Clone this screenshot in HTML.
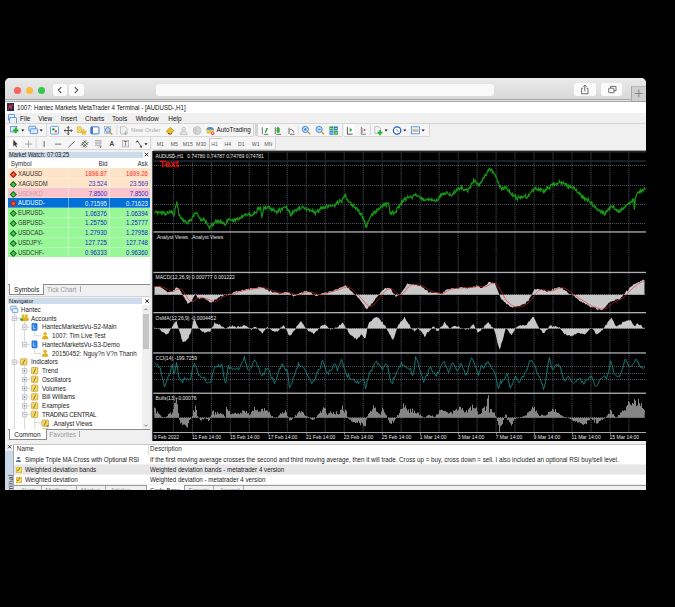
<!DOCTYPE html>
<html><head><meta charset="utf-8"><style>
html,body{margin:0;padding:0;background:#000;width:675px;height:607px;overflow:hidden}
*{box-sizing:content-box}
div{position:absolute}
.t6{position:absolute;font-family:"Liberation Sans",sans-serif;font-size:6.2px;line-height:7px;white-space:nowrap;color:#1a1a1a}
.r{text-align:right}
.pl{position:absolute;top:140.5px;font-family:"Liberation Sans",sans-serif;font-size:5.2px;line-height:6px;white-space:nowrap;color:#5a5a5a}
.ct{position:absolute;font-family:"Liberation Sans",sans-serif;font-size:5px;line-height:6px;white-space:nowrap;color:#e6e6e6}
</style></head><body>
<div id="win" style="left:5px;top:78px;width:641px;height:412px;background:#f0f0f0;border-radius:5px 5px 0 0;overflow:hidden">
</div>
<!-- safari toolbar -->
<div style="left:5px;top:78px;width:641px;height:21.6px;background:linear-gradient(#eaeaea,#d8d8d8);border-radius:5px 5px 0 0"></div>
<div style="left:5px;top:99.4px;width:641px;height:0.9px;background:#a9a9a9"></div>
<div style="left:5px;top:100.2px;width:641px;height:1px;background:#e2e2e2"></div><div style="left:5px;top:101px;width:641px;height:0.8px;background:#a8a8a8"></div>
<div style="left:13.9px;top:86.6px;width:7.4px;height:7.4px;border-radius:50%;background:#fc605b"></div>
<div style="left:26px;top:86.6px;width:7.4px;height:7.4px;border-radius:50%;background:#fdbc40"></div>
<div style="left:37.9px;top:86.6px;width:7.4px;height:7.4px;border-radius:50%;background:#34c84a"></div>
<div style="left:52.6px;top:83.6px;width:14.5px;height:12.9px;border-radius:2.5px;background:#fbfbfb"></div>
<div style="left:68.9px;top:83.6px;width:14.8px;height:12.9px;border-radius:2.5px;background:#fbfbfb"></div>
<svg style="position:absolute;left:0;top:0" width="675" height="607">
<path d="M61.3,87.2 L58.3,90.1 L61.3,93" stroke="#5a5a5a" stroke-width="1.1" fill="none"/>
<path d="M74.8,87.2 L77.8,90.1 L74.8,93" stroke="#5a5a5a" stroke-width="1.1" fill="none"/>
</svg>
<div style="left:156.3px;top:83.9px;width:338px;height:12.6px;border-radius:3px;background:#f9f9f9"></div>
<div style="left:573.8px;top:83px;width:21.8px;height:12.8px;border-radius:2.5px;background:#fbfbfb"></div>
<div style="left:600.8px;top:83px;width:21.5px;height:12.8px;border-radius:2.5px;background:#fbfbfb"></div>
<svg style="position:absolute;left:0;top:0" width="675" height="607">
<path d="M583,88.2 H581.6 V93.8 H588 V88.2 H586.6 M584.8,91.2 V85 M583,86.8 L584.8,85 L586.6,86.8" stroke="#555" stroke-width="0.85" fill="none"/>
<rect x="608.7" y="88.2" width="5.2" height="4.5" stroke="#555" stroke-width="0.85" fill="none" rx="0.5"/>
<path d="M610.6,88.2 V86.4 H616 V90.8 H613.9" stroke="#555" stroke-width="0.85" fill="none"/>
</svg>
<div style="left:631.2px;top:86px;width:14px;height:14.2px;background:#cfcfcf;border-left:0.8px solid #a8a8a8;border-top:0.8px solid #b8b8b8;border-bottom:0.8px solid #a0a0a0"></div>
<svg style="position:absolute;left:0;top:0" width="675" height="607">
<path d="M638.8,89.5 V97.5 M634.8,93.5 H642.8" stroke="#777" stroke-width="0.8"/>
</svg>

<!-- MT4 title row -->
<div style="left:5px;top:101.8px;width:641px;height:11px;background:#ffffff"></div>
<div style="left:6.6px;top:103.2px;width:7.6px;height:7.6px;background:#1d2b52"></div>
<svg style="position:absolute;left:0;top:0" width="675" height="607">
<path d="M8.2,109.5 L9.8,105 L11,108.5 L12.6,104.2" stroke="#d83a2a" stroke-width="1.1" fill="none"/>
</svg>
<div class="t6" style="left:16.9px;top:103.9px;font-size:7px;color:#111;transform:scaleX(0.872);transform-origin:left top">1007: Hantec Markets MetaTrader 4 Terminal - [AUDUSD-,H1]</div>

<!-- menu row -->
<div style="left:5px;top:112.8px;width:641px;height:10.2px;background:#f0f0f0"></div>
<div style="left:7.6px;top:114.4px;width:5.8px;height:4.4px;border:0.8px solid #6b9be0;background:#e8f0fb;border-radius:1px"></div>
<div style="left:9.4px;top:117.2px;width:5.8px;height:4.4px;border:0.8px solid #6b9be0;background:#e8f0fb;border-radius:1px"></div>
<div class="t6" style="left:20px;top:114.6px;font-size:6.5px;color:#111">File</div>
<div class="t6" style="left:38.2px;top:114.6px;font-size:6.5px;color:#111">View</div>
<div class="t6" style="left:60.7px;top:114.6px;font-size:6.5px;color:#111">Insert</div>
<div class="t6" style="left:85px;top:114.6px;font-size:6.5px;color:#111">Charts</div>
<div class="t6" style="left:112px;top:114.6px;font-size:6.5px;color:#111">Tools</div>
<div class="t6" style="left:135.7px;top:114.6px;font-size:6.5px;color:#111">Window</div>
<div class="t6" style="left:168.3px;top:114.6px;font-size:6.5px;color:#111">Help</div>

<!-- toolbars -->
<div style="left:5px;top:123px;width:641px;height:27.6px;background:#f0f0f0"></div>
<div style="left:5px;top:122.6px;width:641px;height:0.7px;background:#d6d6d6"></div>
<!-- toolbar strips -->
<div style="left:7.2px;top:124.1px;width:39.1px;height:11.6px;background:#f5f5f5;border-right:0.8px solid #d8d8d8;border-bottom:0.8px solid #d8d8d8"></div>
<div style="left:48.6px;top:124.1px;width:67.7px;height:11.6px;background:#f5f5f5;border-right:0.8px solid #d8d8d8;border-bottom:0.8px solid #d8d8d8"></div>
<div style="left:116.3px;top:124.1px;width:136.8px;height:11.6px;background:#f5f5f5;border-right:0.8px solid #d8d8d8;border-bottom:0.8px solid #d8d8d8"></div>
<div style="left:255px;top:124.1px;width:2.6px;height:11.6px;background:#d6d6d6"></div>
<div style="left:258px;top:124.1px;width:83.8px;height:11.6px;background:#f5f5f5;border-right:0.8px solid #d8d8d8;border-bottom:0.8px solid #d8d8d8"></div>
<div style="left:343.6px;top:124.1px;width:85px;height:11.6px;background:#f5f5f5;border-right:0.8px solid #d8d8d8;border-bottom:0.8px solid #d8d8d8"></div>
<div style="left:7.7px;top:137.4px;width:142.4px;height:12px;background:#f5f5f5;border-right:0.8px solid #d8d8d8;border-bottom:0.8px solid #d8d8d8"></div>
<div style="left:152.8px;top:137.4px;width:122.5px;height:12px;background:#f5f5f5;border-right:0.8px solid #d8d8d8;border-bottom:0.8px solid #d8d8d8"></div>
<!-- pressed buttons -->
<div style="left:9.4px;top:137.8px;width:11.6px;height:11.2px;background:#fcfcfc"></div>
<div style="left:208.6px;top:137.8px;width:12px;height:11.4px;background:#fcfcfc;border-left:0.7px solid #c8c8c8;border-top:0.7px solid #c8c8c8"></div>
<div style="left:258.9px;top:124.4px;width:11.1px;height:11px;background:#fcfcfc"></div>
<div style="left:343.6px;top:124.4px;width:11.1px;height:11px;background:#fcfcfc"></div>
<svg style="position:absolute;left:0;top:0" width="675" height="607">
<!-- separators -->
<line x1="116.9" y1="125" x2="116.9" y2="135" stroke="#cfcfcf" stroke-width="0.8"/>
<line x1="298.2" y1="125" x2="298.2" y2="135" stroke="#cfcfcf" stroke-width="0.8"/>
<line x1="370.5" y1="125" x2="370.5" y2="135" stroke="#cfcfcf" stroke-width="0.8"/>
<line x1="36.1" y1="138.5" x2="36.1" y2="148.5" stroke="#cfcfcf" stroke-width="0.8"/>
<!-- new chart -->
<rect x="10.4" y="126.4" width="6.4" height="5.6" fill="#dde8f6" stroke="#5a8fd6" stroke-width="0.8"/>
<path d="M15.7,127.6 V133.2 M12.9,130.4 H18.5" stroke="#1cb52a" stroke-width="2"/>
<path d="M21.2,129.4 H24.3 L22.75,131.4 Z" fill="#111"/>
<!-- profiles -->
<rect x="28.8" y="126.2" width="7" height="4.8" fill="#dde8f6" stroke="#4a90e0" stroke-width="0.9" rx="0.8"/>
<rect x="30.3" y="128.8" width="7.4" height="4.8" fill="#dde8f6" stroke="#4a90e0" stroke-width="0.9" rx="0.8"/>
<path d="M39.6,129.4 H42.7 L41.15,131.4 Z" fill="#111"/>
<!-- market watch -->
<rect x="50.5" y="126.4" width="8" height="7.6" fill="#f4f8fd" stroke="#5a9ae0" stroke-width="0.9" rx="1"/>
<circle cx="53.4" cy="129.3" r="1.2" fill="#2aa84a"/>
<circle cx="55.8" cy="131.2" r="1.2" fill="#e85a4a"/>
<!-- data window crosshair -->
<path d="M68.2,126.6 V134.6 M64.2,130.6 H72.2 M66.9,127.9 L68.2,126.6 L69.5,127.9 M66.9,133.3 L68.2,134.6 L69.5,133.3 M65.5,129.3 L64.2,130.6 L65.5,131.9 M70.9,129.3 L72.2,130.6 L70.9,131.9" stroke="#3a3a3a" stroke-width="0.9" fill="none"/>
<!-- navigator -->
<path d="M77.2,126.8 L80.5,126.8 L82,128.2 L82,132.4 L77.2,132.4 Z" fill="#f3d862" stroke="#c8a030" stroke-width="0.5"/>
<path d="M83.8,129.2 L84.7,131.2 L86.6,131.4 L85.2,132.7 L85.6,134.6 L83.8,133.6 L82,134.6 L82.4,132.7 L81,131.4 L82.9,131.2 Z" fill="#f0c828" stroke="#b8901a" stroke-width="0.4"/>
<!-- terminal -->
<rect x="90.8" y="126.9" width="8.2" height="7" fill="#ffffff" stroke="#3a7ad8" stroke-width="1" rx="0.8"/>
<rect x="90.8" y="126.9" width="2.2" height="7" fill="#3a7ad8"/>
<circle cx="92" cy="129.2" r="0.6" fill="#e04040"/>
<!-- strategy tester -->
<rect x="104.4" y="126.6" width="6.4" height="7" fill="#e8eef6" stroke="#a0a8b8" stroke-width="0.6"/>
<circle cx="107.8" cy="130" r="2.4" fill="#c8dcf0" stroke="#4a7ab8" stroke-width="0.8"/>
<path d="M109.5,131.8 L112.4,134.4" stroke="#c8a030" stroke-width="1.3"/>
<!-- new order -->
<path d="M120.5,126.6 H125 L127,128.6 V134 H120.5 Z" fill="#f0f0f0" stroke="#b0b0b0" stroke-width="0.7"/>
<path d="M125.5,131.3 V135 M123.6,133.2 H127.4" stroke="#b0b0b0" stroke-width="1"/>
<!-- gold -->
<path d="M166.3,131.5 L170,127.4 L173.9,130.6 L170.4,134.2 Z" fill="#e8c020" stroke="#a07808" stroke-width="0.6"/>
<path d="M167.8,133 L170.4,134.6 L172.2,133" stroke="#a02020" stroke-width="0.8" fill="none"/>
<!-- people -->
<circle cx="183.6" cy="129.1" r="1.9" fill="#e4e4e4" stroke="#b4b4b4" stroke-width="0.6"/>
<path d="M179.8,134.6 Q180,131.3 183.6,131.3 Q187.2,131.3 187.6,134.6 Z" fill="#e4e4e4" stroke="#b4b4b4" stroke-width="0.6"/>
<!-- globe -->
<circle cx="197" cy="130.6" r="4" fill="#d4d4d4" stroke="#bdbdbd" stroke-width="0.6"/>
<path d="M195,128 Q197,130 195.5,133.5" stroke="#b0b0b0" stroke-width="0.6" fill="none"/>
<!-- autotrading -->
<path d="M206.3,129.6 Q207,126.8 210,126.9 Q213.6,127 214,129.8 L213.6,133.4 L206.8,133.4 Z" fill="#e8c840"/>
<path d="M206.3,129.6 Q207,126.8 210,126.9 Q213.6,127 214,129.8 Z" fill="#3d8fe0"/>
<circle cx="212.6" cy="133.2" r="2" fill="#e02828" stroke="#fff" stroke-width="0.5"/>
<rect x="211.8" y="132.5" width="1.6" height="1.3" fill="#fff"/>
<!-- chart types -->
<path d="M262.3,127.3 V134 M263.6,134.3 H268.2 M265.5,132.6 L266.8,128" stroke="#333" stroke-width="0.7" fill="none"/>
<path d="M265.3,132.3 L267.6,128.2" stroke="#22b030" stroke-width="1.1"/>
<path d="M275.3,127.3 V134 M276.2,134.3 H281" stroke="#333" stroke-width="0.7" fill="none"/>
<rect x="276.9" y="127.6" width="2.5" height="5" rx="0.8" fill="#22c030" stroke="#118820" stroke-width="0.4"/>
<path d="M289,127.8 V134 M290,134.3 H294.6 M289.6,129.9 L291.2,129.3 L293.6,131.2 L293.6,132.4" stroke="#333" stroke-width="0.7" fill="none"/>
<!-- zoom in/out -->
<circle cx="305.3" cy="129.4" r="3.1" fill="#c4dcf4" stroke="#3d84d4" stroke-width="0.9"/>
<path d="M307.5,131.6 L310.2,134.2" stroke="#c8a030" stroke-width="1.4"/>
<path d="M303.8,129.4 H306.8 M305.3,127.9 V130.9" stroke="#2d74c4" stroke-width="0.8"/>
<circle cx="319.1" cy="129.4" r="3.1" fill="#c4dcf4" stroke="#3d84d4" stroke-width="0.9"/>
<path d="M321.3,131.6 L324,134.2" stroke="#c8a030" stroke-width="1.4"/>
<path d="M317.6,129.4 H320.6" stroke="#2d74c4" stroke-width="0.8"/>
<!-- tile -->
<rect x="329.4" y="126.4" width="4" height="4" fill="#2aa840"/>
<rect x="333.8" y="126.4" width="4" height="4" fill="#3a78d0"/>
<rect x="329.4" y="130.8" width="4" height="4" fill="#3a88e0"/>
<rect x="333.8" y="130.8" width="4" height="4" fill="#30b050"/>
<path d="M330,128.6 H332.8 M334.4,128.6 H337.2 M330,133 H332.8 M334.4,133 H337.2" stroke="#fff" stroke-width="0.6"/>
<!-- autoscroll / shift -->
<path d="M347.4,127 V134.2 H352.6" stroke="#333" stroke-width="0.8" fill="none"/>
<path d="M349.7,128 L352.3,130 L349.7,132 Z" fill="#22b030"/>
<path d="M361.3,127 V134.2 H366" stroke="#666" stroke-width="0.8" fill="none"/>
<path d="M362.7,128 V133" stroke="#999" stroke-width="0.8"/>
<circle cx="364.6" cy="130" r="0.9" fill="#e04040"/>
<!-- indicators -->
<path d="M374.8,126.6 H378.8 L380.6,128.4 V133.6 H374.8 Z" fill="#f4f4f4" stroke="#a0a0a0" stroke-width="0.6"/>
<path d="M380,130.2 V135.2 M377.5,132.7 H382.5" stroke="#1cb52a" stroke-width="1.8"/>
<path d="M384.6,129.6 H387.6 L386.1,131.6 Z" fill="#111"/>
<!-- periods clock -->
<circle cx="397.1" cy="130.5" r="3.7" fill="#ffffff" stroke="#1f63c0" stroke-width="1.3"/>
<path d="M396.3,128.8 L397.3,130.6 L398.6,131.4" stroke="#555" stroke-width="0.6" fill="none"/>
<path d="M403.3,129.6 H406.3 L404.8,131.6 Z" fill="#111"/>
<!-- templates -->
<rect x="411.3" y="126.8" width="8.2" height="7" fill="#eaf2fb" stroke="#4a8ad8" stroke-width="0.8"/>
<path d="M412.4,129.4 H418.4 M412.4,131.4 H418.4" stroke="#e08a40" stroke-width="0.5"/>
<path d="M412.4,130.4 H418.4" stroke="#40a040" stroke-width="0.5"/>
<path d="M421.6,129.6 H424.6 L423.1,131.6 Z" fill="#111"/>

<!-- row 2 -->
<path d="M13.3,139.7 L13.3,146.5 L14.9,145 L16.1,147.3 L17,146.9 L15.9,144.6 L17.9,144.4 Z" fill="#3a3a3a"/>
<path d="M28.6,140.6 V147.6 M25.1,144.1 H32.1" stroke="#8a8a8a" stroke-width="0.7"/>
<path d="M44.1,141 V147" stroke="#444" stroke-width="0.8"/>
<path d="M55,144.1 H61.2" stroke="#555" stroke-width="0.8"/>
<path d="M68.4,147.2 L74.7,141.4" stroke="#555" stroke-width="0.8"/>
<path d="M81,145.6 L86.4,140.2 M83,147.4 L88.4,142 M82,141.8 L87,146.8 M81.4,143.6 L85.4,147.6 M83.6,140.6 L87.6,144.6" stroke="#555" stroke-width="0.9"/>
<path d="M95,140.6 H101.6 M95,142.2 H101.6 M95,143.8 H101.6 M95,145.4 H101.6" stroke="#909090" stroke-width="0.7"/>
<path d="M99.3,146.6 H101.7 L100.5,148 Z" fill="#444"/>
<text x="109.6" y="146.4" font-family="Liberation Sans" font-size="6.4" font-weight="bold" fill="#444">A</text>
<rect x="122.3" y="140.3" width="6.4" height="6.6" fill="#f4f4f4" stroke="#999" stroke-width="0.6"/>
<text x="123.5" y="146.2" font-family="Liberation Sans" font-size="6.6" fill="#444">T</text>
<path d="M137.4,141.2 L141,146" stroke="#444" stroke-width="0.8"/>
<path d="M135.6,142.4 L137,140.2 L138.6,141.8 Z" fill="#333"/>
<path d="M139.6,146.8 L142.4,145.6 L141.4,148 Z" fill="#333"/>
<path d="M144.5,143.2 H147.5 L146,145.2 Z" fill="#111"/>
</svg>
<!-- period labels -->
<div class="pl" style="left:156.8px">M1</div>
<div class="pl" style="left:170.8px">M5</div>
<div class="pl" style="left:182.8px">M15</div>
<div class="pl" style="left:196.1px">M30</div>
<div class="pl" style="left:211.2px">H1</div>
<div class="pl" style="left:224.6px">H4</div>
<div class="pl" style="left:238px">D1</div>
<div class="pl" style="left:251.8px">W1</div>
<div class="pl" style="left:264.2px">MN</div>
<div class="t6" style="left:131px;top:126.3px;font-size:6.1px;color:#a8a8a8">New Order</div>
<div class="t6" style="left:216.6px;top:126.3px;font-size:6.3px;color:#111">AutoTrading</div>


<!-- chart -->
<div style="left:150.3px;top:150.6px;width:3px;height:290.7px;background:#e8e8e8"></div>
<div style="left:152.3px;top:150.6px;width:1px;height:290.7px;background:#4a4a4a"></div>
<div style="left:153.3px;top:150.6px;width:492.7px;height:290.7px;background:#000"></div>
<svg style="position:absolute;left:0;top:0" width="675" height="607">
<line x1="173.4" y1="151" x2="173.4" y2="432" stroke="#3d444b" stroke-width="1.1" stroke-dasharray="1.3 0.8"/>
<line x1="192.4" y1="151" x2="192.4" y2="432" stroke="#3d444b" stroke-width="1.1" stroke-dasharray="1.3 0.8"/>
<line x1="211.4" y1="151" x2="211.4" y2="432" stroke="#3d444b" stroke-width="1.1" stroke-dasharray="1.3 0.8"/>
<line x1="230.3" y1="151" x2="230.3" y2="432" stroke="#3d444b" stroke-width="1.1" stroke-dasharray="1.3 0.8"/>
<line x1="249.3" y1="151" x2="249.3" y2="432" stroke="#3d444b" stroke-width="1.1" stroke-dasharray="1.3 0.8"/>
<line x1="268.3" y1="151" x2="268.3" y2="432" stroke="#3d444b" stroke-width="1.1" stroke-dasharray="1.3 0.8"/>
<line x1="287.3" y1="151" x2="287.3" y2="432" stroke="#3d444b" stroke-width="1.1" stroke-dasharray="1.3 0.8"/>
<line x1="306.3" y1="151" x2="306.3" y2="432" stroke="#3d444b" stroke-width="1.1" stroke-dasharray="1.3 0.8"/>
<line x1="325.2" y1="151" x2="325.2" y2="432" stroke="#3d444b" stroke-width="1.1" stroke-dasharray="1.3 0.8"/>
<line x1="344.2" y1="151" x2="344.2" y2="432" stroke="#3d444b" stroke-width="1.1" stroke-dasharray="1.3 0.8"/>
<line x1="363.2" y1="151" x2="363.2" y2="432" stroke="#3d444b" stroke-width="1.1" stroke-dasharray="1.3 0.8"/>
<line x1="382.2" y1="151" x2="382.2" y2="432" stroke="#3d444b" stroke-width="1.1" stroke-dasharray="1.3 0.8"/>
<line x1="401.2" y1="151" x2="401.2" y2="432" stroke="#3d444b" stroke-width="1.1" stroke-dasharray="1.3 0.8"/>
<line x1="420.1" y1="151" x2="420.1" y2="432" stroke="#3d444b" stroke-width="1.1" stroke-dasharray="1.3 0.8"/>
<line x1="439.1" y1="151" x2="439.1" y2="432" stroke="#3d444b" stroke-width="1.1" stroke-dasharray="1.3 0.8"/>
<line x1="458.1" y1="151" x2="458.1" y2="432" stroke="#3d444b" stroke-width="1.1" stroke-dasharray="1.3 0.8"/>
<line x1="477.1" y1="151" x2="477.1" y2="432" stroke="#3d444b" stroke-width="1.1" stroke-dasharray="1.3 0.8"/>
<line x1="496.1" y1="151" x2="496.1" y2="432" stroke="#3d444b" stroke-width="1.1" stroke-dasharray="1.3 0.8"/>
<line x1="515.0" y1="151" x2="515.0" y2="432" stroke="#3d444b" stroke-width="1.1" stroke-dasharray="1.3 0.8"/>
<line x1="534.0" y1="151" x2="534.0" y2="432" stroke="#3d444b" stroke-width="1.1" stroke-dasharray="1.3 0.8"/>
<line x1="553.0" y1="151" x2="553.0" y2="432" stroke="#3d444b" stroke-width="1.1" stroke-dasharray="1.3 0.8"/>
<line x1="572.0" y1="151" x2="572.0" y2="432" stroke="#3d444b" stroke-width="1.1" stroke-dasharray="1.3 0.8"/>
<line x1="591.0" y1="151" x2="591.0" y2="432" stroke="#3d444b" stroke-width="1.1" stroke-dasharray="1.3 0.8"/>
<line x1="609.9" y1="151" x2="609.9" y2="432" stroke="#3d444b" stroke-width="1.1" stroke-dasharray="1.3 0.8"/>
<line x1="628.9" y1="151" x2="628.9" y2="432" stroke="#3d444b" stroke-width="1.1" stroke-dasharray="1.3 0.8"/>
<line x1="154" y1="165.5" x2="646" y2="165.5" stroke="#50585f" stroke-width="1" stroke-dasharray="1 1"/>
<line x1="154" y1="185.5" x2="646" y2="185.5" stroke="#50585f" stroke-width="1" stroke-dasharray="1 1"/>
<line x1="154" y1="204.5" x2="646" y2="204.5" stroke="#50585f" stroke-width="1" stroke-dasharray="1 1"/>
<line x1="154" y1="223.5" x2="646" y2="223.5" stroke="#50585f" stroke-width="1" stroke-dasharray="1 1"/>
<rect x="153.3" y="160.2" width="492.7" height="1.8" fill="#1b252d"/>
<rect x="153.3" y="150.6" width="492.7" height="2" fill="#262626"/>
<line x1="154" y1="294.5" x2="646" y2="294.5" stroke="#50585f" stroke-width="1" stroke-dasharray="1 1"/>
<line x1="154" y1="328.5" x2="646" y2="328.5" stroke="#50585f" stroke-width="1" stroke-dasharray="1 1"/>
<line x1="154" y1="366.5" x2="646" y2="366.5" stroke="#50585f" stroke-width="1" stroke-dasharray="1 1"/>
<line x1="154" y1="373.5" x2="646" y2="373.5" stroke="#50585f" stroke-width="1" stroke-dasharray="1 1"/>
<line x1="154" y1="379.5" x2="646" y2="379.5" stroke="#50585f" stroke-width="1" stroke-dasharray="1 1"/>
<line x1="154" y1="417.5" x2="646" y2="417.5" stroke="#50585f" stroke-width="1" stroke-dasharray="1 1"/>
<path d="M154.3,212.7 L154.8,213.0 L155.3,212.3 L155.8,211.5 L156.3,212.0 L156.8,211.3 L157.3,212.5 L157.8,214.0 L158.3,211.7 L158.8,211.5 L159.3,212.8 L159.8,212.8 L160.3,212.7 L160.8,211.7 L161.3,213.0 L161.8,214.1 L162.3,211.9 L162.8,213.2 L163.3,211.7 L163.8,212.7 L164.3,212.3 L164.8,214.4 L165.3,213.4 L165.8,215.1 L166.3,214.7 L166.8,214.1 L167.3,211.0 L167.8,213.2 L168.3,213.5 L168.8,213.5 L169.3,211.2 L169.8,212.3 L170.3,211.4 L170.8,211.4 L171.3,213.4 L171.8,210.9 L172.3,211.6 L172.8,214.0 L173.3,214.7 L173.8,216.7 L174.3,214.2 L174.8,211.4 L175.3,207.1 L175.8,205.9 L176.3,204.7 L176.8,201.3 L177.3,206.2 L177.8,207.3 L178.3,208.8 L178.8,214.5 L179.3,215.6 L179.8,215.0 L180.3,217.0 L180.8,218.1 L181.3,217.7 L181.8,219.2 L182.3,218.8 L182.8,220.2 L183.3,221.6 L183.8,219.6 L184.3,221.1 L184.8,220.8 L185.3,222.1 L185.8,221.0 L186.3,222.2 L186.8,223.0 L187.3,224.0 L187.8,224.0 L188.3,220.7 L188.8,221.0 L189.3,222.4 L189.8,218.9 L190.3,220.4 L190.8,220.0 L191.3,220.7 L191.8,219.1 L192.3,216.9 L192.8,216.0 L193.3,215.2 L193.8,216.4 L194.3,213.1 L194.8,212.8 L195.3,213.7 L195.8,213.3 L196.3,213.3 L196.8,212.4 L197.3,213.9 L197.8,214.0 L198.3,216.8 L198.8,217.0 L199.3,217.0 L199.8,218.6 L200.3,218.2 L200.8,220.7 L201.3,219.9 L201.8,220.7 L202.3,218.6 L202.8,220.7 L203.3,218.4 L203.8,218.1 L204.3,220.3 L204.8,219.7 L205.3,221.1 L205.8,223.9 L206.3,221.2 L206.8,222.4 L207.3,224.4 L207.8,225.7 L208.3,225.8 L208.8,226.8 L209.3,228.8 L209.8,228.1 L210.3,225.8 L210.8,226.4 L211.3,226.0 L211.8,224.2 L212.3,225.3 L212.8,223.5 L213.3,225.2 L213.8,223.7 L214.3,223.3 L214.8,222.3 L215.3,222.7 L215.8,220.3 L216.3,221.2 L216.8,222.8 L217.3,219.7 L217.8,223.1 L218.3,219.8 L218.8,222.7 L219.3,220.6 L219.8,222.4 L220.3,221.4 L220.8,219.3 L221.3,222.7 L221.8,223.4 L222.3,222.1 L222.8,222.3 L223.3,223.0 L223.8,222.5 L224.3,225.5 L224.8,224.0 L225.3,225.1 L225.8,224.7 L226.3,223.4 L226.8,220.6 L227.3,221.7 L227.8,218.5 L228.3,220.1 L228.8,219.3 L229.3,218.7 L229.8,219.4 L230.3,219.4 L230.8,220.4 L231.3,220.3 L231.8,220.6 L232.3,219.2 L232.8,219.7 L233.3,222.5 L233.8,219.6 L234.3,219.0 L234.8,220.5 L235.3,221.7 L235.8,218.1 L236.3,219.4 L236.8,218.8 L237.3,217.3 L237.8,220.1 L238.3,219.1 L238.8,219.0 L239.3,217.9 L239.8,219.2 L240.3,217.7 L240.8,217.8 L241.3,216.3 L241.8,215.7 L242.3,218.4 L242.8,215.8 L243.3,216.4 L243.8,215.6 L244.3,214.7 L244.8,214.2 L245.3,215.2 L245.8,213.7 L246.3,213.8 L246.8,214.1 L247.3,215.6 L247.8,215.1 L248.3,214.8 L248.8,213.7 L249.3,212.9 L249.8,215.7 L250.3,215.9 L250.8,214.6 L251.3,215.5 L251.8,215.9 L252.3,215.6 L252.8,215.2 L253.3,213.1 L253.8,215.0 L254.3,211.2 L254.8,213.2 L255.3,212.3 L255.8,212.3 L256.3,213.1 L256.8,212.3 L257.3,208.7 L257.8,207.7 L258.3,210.3 L258.8,207.8 L259.3,208.6 L259.8,209.2 L260.3,206.5 L260.8,208.7 L261.3,214.4 L261.8,216.9 L262.3,215.4 L262.8,213.5 L263.3,210.3 L263.8,207.3 L264.3,208.7 L264.8,207.6 L265.3,206.6 L265.8,209.0 L266.3,208.1 L266.8,208.5 L267.3,206.6 L267.8,206.9 L268.3,206.3 L268.8,206.5 L269.3,208.1 L269.8,207.2 L270.3,208.8 L270.8,209.1 L271.3,211.4 L271.8,207.6 L272.3,210.6 L272.8,209.7 L273.3,210.1 L273.8,208.6 L274.3,210.1 L274.8,211.8 L275.3,211.1 L275.8,211.6 L276.3,211.4 L276.8,213.4 L277.3,212.3 L277.8,209.9 L278.3,211.6 L278.8,209.6 L279.3,207.6 L279.8,210.4 L280.3,212.1 L280.8,210.1 L281.3,208.2 L281.8,208.0 L282.3,210.0 L282.8,208.4 L283.3,207.8 L283.8,207.2 L284.3,206.8 L284.8,207.2 L285.3,207.0 L285.8,207.3 L286.3,206.5 L286.8,209.1 L287.3,208.4 L287.8,211.2 L288.3,209.1 L288.8,211.2 L289.3,212.1 L289.8,211.3 L290.3,215.6 L290.8,216.1 L291.3,213.8 L291.8,214.8 L292.3,213.9 L292.8,209.8 L293.3,212.8 L293.8,212.0 L294.3,211.7 L294.8,209.8 L295.3,210.3 L295.8,210.0 L296.3,211.2 L296.8,209.7 L297.3,209.0 L297.8,210.6 L298.3,207.9 L298.8,207.9 L299.3,206.0 L299.8,209.8 L300.3,208.9 L300.8,208.7 L301.3,208.2 L301.8,207.3 L302.3,207.2 L302.8,206.4 L303.3,206.7 L303.8,207.3 L304.3,209.3 L304.8,208.5 L305.3,208.0 L305.8,207.7 L306.3,207.9 L306.8,210.9 L307.3,209.8 L307.8,209.5 L308.3,209.2 L308.8,208.5 L309.3,210.0 L309.8,211.3 L310.3,210.0 L310.8,210.4 L311.3,210.7 L311.8,211.3 L312.3,209.4 L312.8,211.3 L313.3,210.8 L313.8,213.1 L314.3,211.3 L314.8,213.1 L315.3,214.5 L315.8,212.0 L316.3,211.3 L316.8,211.9 L317.3,211.3 L317.8,209.8 L318.3,211.2 L318.8,212.7 L319.3,209.6 L319.8,209.3 L320.3,207.9 L320.8,209.2 L321.3,206.9 L321.8,206.7 L322.3,209.2 L322.8,206.3 L323.3,208.3 L323.8,208.5 L324.3,206.9 L324.8,207.2 L325.3,208.9 L325.8,206.2 L326.3,205.7 L326.8,204.7 L327.3,206.3 L327.8,208.0 L328.3,207.3 L328.8,205.0 L329.3,205.0 L329.8,205.4 L330.3,206.3 L330.8,205.6 L331.3,206.1 L331.8,206.1 L332.3,205.3 L332.8,205.6 L333.3,205.8 L333.8,205.2 L334.3,205.6 L334.8,206.9 L335.3,205.1 L335.8,204.2 L336.3,201.8 L336.8,204.0 L337.3,200.9 L337.8,201.2 L338.3,203.7 L338.8,203.2 L339.3,201.9 L339.8,199.7 L340.3,201.0 L340.8,200.4 L341.3,201.7 L341.8,203.1 L342.3,200.0 L342.8,198.2 L343.3,197.1 L343.8,197.7 L344.3,196.9 L344.8,195.1 L345.3,196.0 L345.8,194.8 L346.3,198.6 L346.8,199.6 L347.3,200.6 L347.8,199.8 L348.3,202.0 L348.8,202.0 L349.3,202.1 L349.8,202.6 L350.3,201.9 L350.8,202.1 L351.3,205.3 L351.8,204.5 L352.3,205.4 L352.8,206.8 L353.3,203.9 L353.8,205.5 L354.3,207.1 L354.8,207.8 L355.3,207.3 L355.8,209.4 L356.3,208.8 L356.8,207.6 L357.3,208.5 L357.8,211.1 L358.3,211.3 L358.8,209.1 L359.3,213.6 L359.8,213.3 L360.3,214.8 L360.8,213.3 L361.3,214.0 L361.8,213.6 L362.3,218.6 L362.8,216.0 L363.3,219.8 L363.8,218.9 L364.3,221.6 L364.8,221.1 L365.3,224.4 L365.8,227.7 L366.3,224.6 L366.8,226.3 L367.3,224.4 L367.8,221.7 L368.3,221.4 L368.8,220.4 L369.3,219.8 L369.8,218.2 L370.3,216.9 L370.8,216.5 L371.3,214.8 L371.8,214.0 L372.3,214.9 L372.8,215.6 L373.3,212.2 L373.8,213.5 L374.3,212.2 L374.8,211.3 L375.3,213.0 L375.8,210.9 L376.3,212.8 L376.8,209.6 L377.3,210.5 L377.8,209.4 L378.3,208.4 L378.8,209.6 L379.3,208.3 L379.8,208.8 L380.3,207.7 L380.8,206.0 L381.3,206.8 L381.8,206.6 L382.3,207.3 L382.8,204.7 L383.3,205.5 L383.8,203.4 L384.3,206.1 L384.8,203.9 L385.3,203.0 L385.8,205.0 L386.3,206.3 L386.8,203.0 L387.3,203.4 L387.8,203.7 L388.3,203.2 L388.8,204.9 L389.3,206.9 L389.8,211.3 L390.3,214.5 L390.8,212.8 L391.3,214.1 L391.8,212.3 L392.3,211.9 L392.8,211.0 L393.3,215.3 L393.8,212.6 L394.3,213.1 L394.8,212.7 L395.3,212.2 L395.8,211.4 L396.3,212.9 L396.8,208.7 L397.3,207.4 L397.8,207.3 L398.3,206.3 L398.8,208.1 L399.3,207.5 L399.8,204.7 L400.3,203.4 L400.8,204.0 L401.3,205.4 L401.8,199.7 L402.3,203.0 L402.8,200.4 L403.3,202.2 L403.8,199.0 L404.3,199.3 L404.8,197.6 L405.3,198.0 L405.8,200.7 L406.3,199.8 L406.8,198.1 L407.3,197.4 L407.8,195.9 L408.3,197.5 L408.8,197.8 L409.3,197.5 L409.8,197.3 L410.3,195.9 L410.8,196.9 L411.3,196.8 L411.8,198.2 L412.3,198.7 L412.8,196.1 L413.3,195.1 L413.8,195.7 L414.3,194.9 L414.8,194.5 L415.3,195.1 L415.8,193.8 L416.3,195.8 L416.8,195.3 L417.3,196.2 L417.8,196.1 L418.3,195.8 L418.8,196.0 L419.3,197.2 L419.8,197.3 L420.3,198.6 L420.8,198.7 L421.3,197.5 L421.8,199.7 L422.3,198.4 L422.8,199.7 L423.3,200.4 L423.8,198.2 L424.3,200.7 L424.8,200.7 L425.3,200.3 L425.8,199.9 L426.3,199.8 L426.8,199.0 L427.3,199.8 L427.8,199.4 L428.3,200.1 L428.8,198.4 L429.3,200.1 L429.8,199.9 L430.3,199.4 L430.8,199.2 L431.3,200.4 L431.8,197.9 L432.3,200.5 L432.8,200.4 L433.3,200.5 L433.8,200.8 L434.3,199.6 L434.8,200.2 L435.3,201.4 L435.8,201.2 L436.3,201.0 L436.8,198.5 L437.3,200.4 L437.8,200.7 L438.3,200.0 L438.8,198.6 L439.3,195.9 L439.8,198.4 L440.3,196.6 L440.8,193.3 L441.3,196.3 L441.8,193.5 L442.3,193.2 L442.8,193.5 L443.3,195.3 L443.8,192.9 L444.3,193.1 L444.8,194.7 L445.3,194.6 L445.8,192.8 L446.3,192.8 L446.8,191.7 L447.3,192.6 L447.8,194.1 L448.3,194.2 L448.8,194.1 L449.3,195.3 L449.8,193.3 L450.3,194.4 L450.8,195.5 L451.3,195.5 L451.8,196.1 L452.3,194.9 L452.8,193.7 L453.3,194.1 L453.8,192.1 L454.3,190.9 L454.8,193.2 L455.3,192.0 L455.8,192.1 L456.3,189.3 L456.8,190.5 L457.3,189.8 L457.8,189.1 L458.3,187.0 L458.8,188.9 L459.3,190.0 L459.8,189.0 L460.3,187.5 L460.8,188.2 L461.3,189.2 L461.8,185.1 L462.3,188.3 L462.8,189.2 L463.3,189.5 L463.8,190.8 L464.3,190.3 L464.8,189.4 L465.3,189.5 L465.8,190.1 L466.3,188.6 L466.8,189.3 L467.3,190.6 L467.8,191.9 L468.3,188.7 L468.8,188.0 L469.3,187.6 L469.8,188.2 L470.3,185.8 L470.8,186.8 L471.3,183.2 L471.8,183.3 L472.3,182.6 L472.8,183.0 L473.3,182.6 L473.8,179.0 L474.3,180.1 L474.8,181.9 L475.3,181.1 L475.8,180.5 L476.3,183.9 L476.8,183.7 L477.3,184.0 L477.8,183.3 L478.3,185.4 L478.8,184.3 L479.3,186.3 L479.8,183.7 L480.3,182.9 L480.8,183.2 L481.3,181.2 L481.8,182.0 L482.3,180.6 L482.8,178.2 L483.3,178.5 L483.8,177.1 L484.3,177.7 L484.8,174.9 L485.3,174.2 L485.8,175.3 L486.3,175.6 L486.8,174.4 L487.3,171.2 L487.8,170.4 L488.3,171.1 L488.8,169.0 L489.3,168.3 L489.8,170.0 L490.3,170.8 L490.8,169.6 L491.3,169.0 L491.8,169.6 L492.3,172.5 L492.8,171.2 L493.3,172.3 L493.8,173.1 L494.3,174.0 L494.8,173.9 L495.3,176.1 L495.8,175.7 L496.3,177.6 L496.8,178.0 L497.3,181.8 L497.8,181.7 L498.3,182.0 L498.8,183.7 L499.3,185.1 L499.8,187.5 L500.3,185.9 L500.8,186.8 L501.3,187.4 L501.8,190.8 L502.3,188.8 L502.8,187.4 L503.3,188.3 L503.8,189.8 L504.3,186.9 L504.8,186.6 L505.3,188.4 L505.8,187.4 L506.3,187.5 L506.8,186.8 L507.3,190.5 L507.8,191.0 L508.3,190.4 L508.8,191.3 L509.3,188.8 L509.8,192.7 L510.3,192.5 L510.8,194.0 L511.3,195.1 L511.8,194.6 L512.3,193.6 L512.8,196.3 L513.3,195.1 L513.8,195.8 L514.3,195.7 L514.8,196.2 L515.3,194.0 L515.8,198.5 L516.3,197.5 L516.8,198.7 L517.3,200.0 L517.8,197.8 L518.3,195.8 L518.8,197.1 L519.3,196.9 L519.8,197.8 L520.3,198.4 L520.8,195.7 L521.3,198.4 L521.8,196.0 L522.3,198.0 L522.8,197.3 L523.3,196.9 L523.8,197.0 L524.3,196.3 L524.8,196.1 L525.3,194.6 L525.8,196.4 L526.3,198.5 L526.8,198.5 L527.3,197.6 L527.8,196.7 L528.3,194.9 L528.8,196.9 L529.3,194.5 L529.8,193.9 L530.3,193.0 L530.8,192.8 L531.3,191.5 L531.8,191.3 L532.3,189.5 L532.8,189.7 L533.3,192.2 L533.8,188.8 L534.3,187.9 L534.8,188.9 L535.3,189.2 L535.8,187.2 L536.3,188.4 L536.8,189.9 L537.3,189.3 L537.8,189.2 L538.3,191.1 L538.8,188.6 L539.3,189.6 L539.8,189.0 L540.3,191.6 L540.8,187.6 L541.3,189.3 L541.8,189.6 L542.3,191.2 L542.8,191.3 L543.3,192.3 L543.8,188.9 L544.3,191.9 L544.8,190.7 L545.3,189.9 L545.8,191.0 L546.3,188.8 L546.8,187.0 L547.3,188.7 L547.8,186.9 L548.3,187.5 L548.8,188.4 L549.3,187.9 L549.8,189.0 L550.3,186.5 L550.8,184.5 L551.3,185.0 L551.8,184.4 L552.3,183.7 L552.8,185.5 L553.3,184.0 L553.8,182.2 L554.3,185.2 L554.8,184.0 L555.3,184.4 L555.8,183.9 L556.3,184.3 L556.8,183.4 L557.3,184.6 L557.8,183.4 L558.3,183.2 L558.8,183.0 L559.3,180.6 L559.8,182.1 L560.3,182.2 L560.8,182.9 L561.3,181.3 L561.8,185.1 L562.3,183.4 L562.8,182.0 L563.3,181.6 L563.8,183.6 L564.3,184.0 L564.8,183.4 L565.3,184.6 L565.8,183.9 L566.3,185.6 L566.8,184.2 L567.3,185.3 L567.8,186.9 L568.3,189.1 L568.8,185.1 L569.3,186.0 L569.8,185.9 L570.3,188.1 L570.8,186.1 L571.3,187.2 L571.8,188.0 L572.3,187.2 L572.8,187.5 L573.3,188.4 L573.8,186.7 L574.3,187.8 L574.8,189.4 L575.3,190.5 L575.8,190.5 L576.3,189.1 L576.8,191.0 L577.3,193.0 L577.8,193.1 L578.3,192.7 L578.8,192.2 L579.3,194.4 L579.8,193.4 L580.3,193.1 L580.8,194.0 L581.3,197.1 L581.8,196.0 L582.3,197.6 L582.8,196.0 L583.3,198.1 L583.8,196.6 L584.3,197.5 L584.8,201.0 L585.3,199.3 L585.8,198.1 L586.3,198.9 L586.8,199.8 L587.3,201.1 L587.8,199.4 L588.3,198.3 L588.8,200.4 L589.3,201.1 L589.8,201.5 L590.3,203.3 L590.8,202.4 L591.3,203.4 L591.8,201.4 L592.3,204.2 L592.8,206.3 L593.3,205.3 L593.8,205.3 L594.3,205.8 L594.8,208.4 L595.3,205.8 L595.8,207.4 L596.3,208.7 L596.8,209.7 L597.3,208.9 L597.8,210.4 L598.3,210.2 L598.8,210.9 L599.3,210.8 L599.8,209.9 L600.3,211.4 L600.8,212.8 L601.3,210.8 L601.8,211.9 L602.3,213.2 L602.8,211.4 L603.3,213.1 L603.8,211.9 L604.3,214.5 L604.8,215.4 L605.3,214.5 L605.8,211.3 L606.3,212.0 L606.8,210.7 L607.3,210.2 L607.8,211.5 L608.3,207.5 L608.8,209.9 L609.3,208.0 L609.8,209.3 L610.3,207.3 L610.8,205.8 L611.3,206.4 L611.8,207.0 L612.3,206.6 L612.8,207.5 L613.3,206.7 L613.8,205.2 L614.3,209.3 L614.8,209.4 L615.3,209.2 L615.8,209.5 L616.3,211.0 L616.8,209.6 L617.3,209.8 L617.8,210.8 L618.3,212.8 L618.8,210.2 L619.3,213.0 L619.8,210.4 L620.3,209.4 L620.8,211.8 L621.3,209.8 L621.8,207.9 L622.3,208.6 L622.8,209.7 L623.3,209.6 L623.8,207.3 L624.3,207.8 L624.8,207.8 L625.3,205.7 L625.8,206.5 L626.3,205.6 L626.8,204.6 L627.3,204.2 L627.8,204.5 L628.3,203.9 L628.8,202.7 L629.3,202.4 L629.8,203.7 L630.3,202.2 L630.8,202.5 L631.3,202.3 L631.8,201.1 L632.3,202.6 L632.8,198.4 L633.3,199.9 L633.8,199.6 L634.3,209.6 L634.8,206.4 L635.3,198.9 L635.8,197.0 L636.3,195.9 L636.8,193.5 L637.3,193.3 L637.8,192.1 L638.3,192.6 L638.8,192.7 L639.3,191.6 L639.8,192.8 L640.3,188.7 L640.8,192.0 L641.3,189.8 L641.8,192.0 L642.3,190.4 L642.8,189.5 L643.3,190.8 L643.8,189.1 L644.3,188.9 L644.8,188.0 L645.3,189.7" stroke="#189818" stroke-width="1.15" fill="none"/>
<path d="M154.5,294.8 L154.5,286.6 L155.5,286.9 L156.5,286.3 L157.5,286.9 L158.5,286.4 L159.5,286.4 L160.5,287.0 L161.5,288.0 L162.5,288.2 L163.5,289.0 L164.5,289.8 L165.5,290.6 L166.5,291.0 L167.5,292.6 L168.5,291.9 L169.5,292.1 L170.5,291.4 L171.5,291.7 L172.5,291.6 L173.5,290.1 L174.5,289.9 L175.5,287.8 L176.5,287.3 L177.5,287.9 L178.5,288.2 L179.5,289.3 L180.5,291.0 L181.5,292.8 L182.5,294.8 L183.5,296.6 L184.5,297.7 L185.5,300.1 L186.5,300.8 L187.5,303.7 L188.5,303.2 L189.5,302.6 L190.5,302.1 L191.5,301.7 L192.5,299.2 L193.5,297.2 L194.5,295.7 L195.5,294.0 L196.5,295.6 L197.5,297.9 L198.5,297.8 L199.5,299.2 L200.5,298.0 L201.5,298.5 L202.5,298.0 L203.5,297.9 L204.5,298.2 L205.5,299.5 L206.5,299.6 L207.5,300.4 L208.5,300.7 L209.5,302.2 L210.5,302.6 L211.5,302.5 L212.5,301.5 L213.5,301.7 L214.5,299.5 L215.5,299.6 L216.5,299.6 L217.5,298.4 L218.5,297.6 L219.5,297.2 L220.5,296.1 L221.5,296.2 L222.5,296.6 L223.5,295.6 L224.5,294.4 L225.5,294.4 L226.5,294.4 L227.5,294.9 L228.5,293.9 L229.5,293.8 L230.5,294.3 L231.5,294.0 L232.5,293.0 L233.5,292.3 L234.5,291.8 L235.5,291.8 L236.5,290.7 L237.5,291.7 L238.5,290.7 L239.5,290.9 L240.5,291.1 L241.5,290.6 L242.5,289.5 L243.5,290.2 L244.5,290.2 L245.5,289.2 L246.5,289.0 L247.5,289.3 L248.5,288.5 L249.5,289.7 L250.5,287.9 L251.5,288.3 L252.5,288.5 L253.5,288.3 L254.5,288.3 L255.5,288.2 L256.5,287.8 L257.5,288.2 L258.5,286.6 L259.5,287.3 L260.5,286.8 L261.5,287.4 L262.5,287.9 L263.5,287.8 L264.5,288.3 L265.5,289.4 L266.5,289.6 L267.5,289.5 L268.5,291.2 L269.5,291.6 L270.5,290.2 L271.5,291.4 L272.5,292.7 L273.5,292.2 L274.5,292.3 L275.5,292.4 L276.5,292.6 L277.5,293.0 L278.5,293.1 L279.5,293.9 L280.5,293.6 L281.5,293.5 L282.5,292.8 L283.5,292.9 L284.5,292.1 L285.5,292.0 L286.5,292.2 L287.5,291.7 L288.5,292.6 L289.5,293.3 L290.5,294.0 L291.5,294.7 L292.5,295.4 L293.5,296.7 L294.5,295.5 L295.5,296.1 L296.5,295.0 L297.5,294.1 L298.5,293.8 L299.5,293.2 L300.5,293.1 L301.5,292.3 L302.5,293.0 L303.5,291.9 L304.5,291.1 L305.5,291.6 L306.5,290.9 L307.5,291.6 L308.5,291.9 L309.5,292.2 L310.5,291.9 L311.5,292.7 L312.5,294.5 L313.5,294.4 L314.5,294.9 L315.5,295.7 L316.5,296.3 L317.5,295.8 L318.5,295.0 L319.5,294.7 L320.5,294.5 L321.5,293.6 L322.5,293.1 L323.5,293.3 L324.5,292.5 L325.5,292.6 L326.5,292.4 L327.5,293.2 L328.5,291.5 L329.5,291.6 L330.5,291.3 L331.5,291.3 L332.5,291.3 L333.5,290.4 L334.5,290.0 L335.5,289.3 L336.5,289.2 L337.5,289.4 L338.5,288.7 L339.5,287.8 L340.5,287.6 L341.5,287.3 L342.5,287.1 L343.5,286.2 L344.5,285.9 L345.5,285.0 L346.5,286.2 L347.5,288.4 L348.5,287.6 L349.5,289.4 L350.5,290.6 L351.5,291.3 L352.5,292.1 L353.5,293.4 L354.5,294.4 L355.5,295.3 L356.5,295.5 L357.5,297.3 L358.5,297.9 L359.5,299.1 L360.5,300.4 L361.5,302.0 L362.5,303.5 L363.5,304.3 L364.5,306.3 L365.5,307.9 L366.5,309.2 L367.5,308.8 L368.5,307.1 L369.5,306.1 L370.5,305.6 L371.5,303.6 L372.5,303.3 L373.5,301.8 L374.5,300.4 L375.5,298.4 L376.5,297.4 L377.5,296.4 L378.5,295.4 L379.5,294.1 L380.5,292.7 L381.5,291.6 L382.5,290.3 L383.5,289.9 L384.5,288.6 L385.5,288.0 L386.5,288.6 L387.5,288.1 L388.5,287.7 L389.5,288.2 L390.5,288.2 L391.5,289.7 L392.5,292.3 L393.5,293.4 L394.5,294.1 L395.5,296.5 L396.5,296.7 L397.5,295.6 L398.5,295.2 L399.5,294.9 L400.5,293.7 L401.5,292.4 L402.5,291.1 L403.5,289.6 L404.5,288.2 L405.5,286.7 L406.5,284.9 L407.5,283.3 L408.5,284.0 L409.5,284.3 L410.5,284.1 L411.5,284.8 L412.5,284.3 L413.5,284.2 L414.5,285.3 L415.5,285.1 L416.5,285.0 L417.5,285.4 L418.5,285.7 L419.5,286.0 L420.5,285.3 L421.5,286.7 L422.5,287.4 L423.5,287.8 L424.5,288.9 L425.5,290.1 L426.5,290.1 L427.5,290.6 L428.5,292.8 L429.5,292.4 L430.5,292.1 L431.5,292.8 L432.5,292.9 L433.5,292.4 L434.5,293.1 L435.5,292.5 L436.5,292.4 L437.5,293.1 L438.5,293.6 L439.5,293.3 L440.5,293.9 L441.5,293.5 L442.5,294.0 L443.5,291.6 L444.5,291.7 L445.5,290.3 L446.5,289.5 L447.5,289.2 L448.5,289.2 L449.5,289.3 L450.5,288.7 L451.5,288.2 L452.5,288.2 L453.5,288.5 L454.5,288.5 L455.5,288.8 L456.5,288.2 L457.5,288.4 L458.5,288.5 L459.5,287.8 L460.5,287.0 L461.5,287.1 L462.5,287.0 L463.5,288.3 L464.5,287.2 L465.5,288.2 L466.5,287.9 L467.5,288.4 L468.5,288.1 L469.5,287.6 L470.5,287.5 L471.5,287.5 L472.5,287.3 L473.5,286.6 L474.5,286.5 L475.5,287.0 L476.5,285.2 L477.5,285.7 L478.5,285.8 L479.5,286.9 L480.5,287.9 L481.5,288.1 L482.5,287.7 L483.5,286.0 L484.5,286.5 L485.5,285.0 L486.5,284.9 L487.5,284.0 L488.5,282.0 L489.5,282.1 L490.5,281.9 L491.5,282.9 L492.5,282.8 L493.5,283.3 L494.5,283.1 L495.5,284.8 L496.5,287.5 L497.5,289.7 L498.5,292.5 L499.5,294.9 L500.5,297.4 L501.5,299.4 L502.5,299.7 L503.5,301.1 L504.5,302.0 L505.5,302.5 L506.5,304.5 L507.5,304.0 L508.5,305.0 L509.5,305.9 L510.5,306.7 L511.5,307.1 L512.5,307.7 L513.5,307.1 L514.5,306.7 L515.5,307.1 L516.5,306.6 L517.5,306.2 L518.5,306.0 L519.5,306.2 L520.5,305.4 L521.5,305.0 L522.5,304.2 L523.5,304.3 L524.5,303.8 L525.5,303.8 L526.5,301.6 L527.5,301.3 L528.5,301.0 L529.5,298.6 L530.5,296.7 L531.5,295.8 L532.5,293.1 L533.5,290.9 L534.5,289.0 L535.5,289.6 L536.5,289.5 L537.5,288.8 L538.5,289.0 L539.5,289.6 L540.5,289.7 L541.5,289.3 L542.5,290.2 L543.5,290.6 L544.5,290.0 L545.5,291.0 L546.5,291.7 L547.5,291.7 L548.5,290.6 L549.5,290.9 L550.5,290.9 L551.5,290.8 L552.5,288.6 L553.5,290.3 L554.5,288.1 L555.5,288.6 L556.5,288.2 L557.5,287.6 L558.5,287.2 L559.5,287.0 L560.5,288.2 L561.5,287.9 L562.5,287.5 L563.5,290.3 L564.5,289.8 L565.5,291.1 L566.5,290.7 L567.5,292.5 L568.5,293.4 L569.5,294.2 L570.5,294.3 L571.5,294.5 L572.5,295.6 L573.5,295.3 L574.5,296.2 L575.5,297.7 L576.5,297.9 L577.5,298.9 L578.5,299.6 L579.5,301.2 L580.5,301.5 L581.5,301.5 L582.5,302.7 L583.5,302.4 L584.5,303.3 L585.5,304.5 L586.5,304.1 L587.5,305.2 L588.5,305.3 L589.5,306.5 L590.5,307.5 L591.5,306.7 L592.5,307.4 L593.5,307.2 L594.5,307.4 L595.5,307.7 L596.5,309.2 L597.5,309.9 L598.5,309.4 L599.5,309.1 L600.5,310.1 L601.5,309.9 L602.5,310.1 L603.5,308.8 L604.5,307.8 L605.5,307.0 L606.5,305.4 L607.5,304.5 L608.5,302.9 L609.5,302.5 L610.5,301.5 L611.5,301.7 L612.5,301.0 L613.5,301.1 L614.5,300.8 L615.5,299.6 L616.5,299.5 L617.5,299.1 L618.5,299.5 L619.5,299.5 L620.5,298.5 L621.5,296.9 L622.5,296.6 L623.5,294.1 L624.5,294.4 L625.5,292.3 L626.5,290.2 L627.5,291.6 L628.5,290.0 L629.5,287.7 L630.5,287.1 L631.5,286.2 L632.5,285.7 L633.5,284.3 L634.5,284.0 L635.5,283.8 L636.5,283.0 L637.5,282.8 L638.5,281.7 L639.5,282.4 L640.5,280.8 L641.5,280.9 L642.5,279.7 L643.5,279.7 L644.5,280.6 L644.5,294.8 Z" fill="#c8c8c8"/>
<path d="M154.5,286.4 L155.5,286.4 L156.5,286.4 L157.5,286.4 L158.5,286.4 L159.5,286.4 L160.5,286.6 L161.5,286.8 L162.5,287.1 L163.5,287.5 L164.5,287.9 L165.5,288.5 L166.5,289.1 L167.5,289.7 L168.5,290.3 L169.5,290.8 L170.5,291.1 L171.5,291.4 L172.5,291.5 L173.5,291.3 L174.5,290.9 L175.5,290.2 L176.5,289.7 L177.5,289.4 L178.5,289.1 L179.5,289.0 L180.5,289.2 L181.5,289.7 L182.5,290.5 L183.5,291.7 L184.5,293.2 L185.5,294.8 L186.5,296.5 L187.5,298.1 L188.5,299.4 L189.5,300.5 L190.5,301.2 L191.5,301.6 L192.5,301.5 L193.5,301.1 L194.5,300.3 L195.5,299.5 L196.5,298.8 L197.5,298.3 L198.5,297.9 L199.5,297.6 L200.5,297.4 L201.5,297.4 L202.5,297.6 L203.5,297.9 L204.5,298.2 L205.5,298.5 L206.5,298.7 L207.5,299.0 L208.5,299.3 L209.5,299.8 L210.5,300.2 L211.5,300.7 L212.5,301.0 L213.5,301.2 L214.5,301.2 L215.5,301.1 L216.5,300.8 L217.5,300.3 L218.5,299.7 L219.5,299.2 L220.5,298.6 L221.5,297.9 L222.5,297.4 L223.5,296.8 L224.5,296.3 L225.5,295.9 L226.5,295.5 L227.5,295.2 L228.5,294.9 L229.5,294.6 L230.5,294.4 L231.5,294.2 L232.5,294.0 L233.5,293.7 L234.5,293.4 L235.5,293.1 L236.5,292.8 L237.5,292.5 L238.5,292.1 L239.5,291.7 L240.5,291.4 L241.5,291.1 L242.5,290.8 L243.5,290.5 L244.5,290.3 L245.5,290.1 L246.5,289.9 L247.5,289.7 L248.5,289.6 L249.5,289.5 L250.5,289.3 L251.5,289.2 L252.5,289.0 L253.5,288.9 L254.5,288.7 L255.5,288.6 L256.5,288.4 L257.5,288.2 L258.5,288.1 L259.5,287.9 L260.5,287.7 L261.5,287.7 L262.5,287.7 L263.5,287.7 L264.5,287.9 L265.5,288.0 L266.5,288.3 L267.5,288.6 L268.5,289.0 L269.5,289.4 L270.5,289.8 L271.5,290.1 L272.5,290.5 L273.5,290.9 L274.5,291.2 L275.5,291.5 L276.5,291.9 L277.5,292.2 L278.5,292.5 L279.5,292.7 L280.5,293.0 L281.5,293.1 L282.5,293.2 L283.5,293.2 L284.5,293.1 L285.5,293.0 L286.5,292.8 L287.5,292.7 L288.5,292.6 L289.5,292.6 L290.5,292.8 L291.5,293.1 L292.5,293.5 L293.5,293.9 L294.5,294.3 L295.5,294.7 L296.5,294.9 L297.5,295.0 L298.5,295.0 L299.5,294.8 L300.5,294.5 L301.5,294.0 L302.5,293.6 L303.5,293.3 L304.5,292.9 L305.5,292.6 L306.5,292.4 L307.5,292.1 L308.5,292.0 L309.5,292.0 L310.5,292.1 L311.5,292.2 L312.5,292.5 L313.5,292.8 L314.5,293.2 L315.5,293.6 L316.5,294.0 L317.5,294.3 L318.5,294.6 L319.5,294.7 L320.5,294.7 L321.5,294.6 L322.5,294.4 L323.5,294.2 L324.5,293.9 L325.5,293.6 L326.5,293.3 L327.5,293.0 L328.5,292.7 L329.5,292.4 L330.5,292.1 L331.5,291.9 L332.5,291.6 L333.5,291.4 L334.5,291.1 L335.5,290.8 L336.5,290.5 L337.5,290.2 L338.5,289.9 L339.5,289.5 L340.5,289.1 L341.5,288.7 L342.5,288.2 L343.5,287.8 L344.5,287.4 L345.5,287.1 L346.5,287.0 L347.5,287.0 L348.5,287.2 L349.5,287.6 L350.5,288.1 L351.5,288.8 L352.5,289.6 L353.5,290.5 L354.5,291.5 L355.5,292.5 L356.5,293.4 L357.5,294.4 L358.5,295.4 L359.5,296.4 L360.5,297.4 L361.5,298.5 L362.5,299.6 L363.5,300.8 L364.5,302.0 L365.5,303.3 L366.5,304.4 L367.5,305.2 L368.5,305.9 L369.5,306.3 L370.5,306.4 L371.5,306.2 L372.5,305.8 L373.5,305.1 L374.5,304.0 L375.5,302.8 L376.5,301.6 L377.5,300.4 L378.5,299.1 L379.5,297.9 L380.5,296.6 L381.5,295.3 L382.5,294.1 L383.5,292.9 L384.5,291.8 L385.5,290.9 L386.5,290.1 L387.5,289.5 L388.5,289.0 L389.5,288.7 L390.5,288.7 L391.5,288.9 L392.5,289.4 L393.5,290.2 L394.5,291.1 L395.5,292.0 L396.5,292.9 L397.5,293.6 L398.5,294.3 L399.5,294.7 L400.5,294.7 L401.5,294.4 L402.5,293.8 L403.5,292.8 L404.5,291.7 L405.5,290.5 L406.5,289.2 L407.5,288.0 L408.5,286.9 L409.5,286.1 L410.5,285.4 L411.5,284.9 L412.5,284.5 L413.5,284.4 L414.5,284.4 L415.5,284.5 L416.5,284.6 L417.5,284.7 L418.5,284.9 L419.5,285.1 L420.5,285.4 L421.5,285.7 L422.5,286.1 L423.5,286.6 L424.5,287.1 L425.5,287.7 L426.5,288.3 L427.5,289.0 L428.5,289.7 L429.5,290.3 L430.5,290.9 L431.5,291.4 L432.5,291.8 L433.5,292.2 L434.5,292.4 L435.5,292.6 L436.5,292.7 L437.5,292.8 L438.5,292.9 L439.5,293.0 L440.5,293.1 L441.5,293.1 L442.5,293.0 L443.5,292.9 L444.5,292.6 L445.5,292.2 L446.5,291.7 L447.5,291.2 L448.5,290.6 L449.5,290.1 L450.5,289.6 L451.5,289.2 L452.5,288.9 L453.5,288.7 L454.5,288.5 L455.5,288.4 L456.5,288.3 L457.5,288.2 L458.5,288.1 L459.5,288.0 L460.5,287.9 L461.5,287.9 L462.5,287.8 L463.5,287.7 L464.5,287.7 L465.5,287.7 L466.5,287.6 L467.5,287.6 L468.5,287.6 L469.5,287.6 L470.5,287.6 L471.5,287.5 L472.5,287.5 L473.5,287.3 L474.5,287.2 L475.5,287.0 L476.5,286.8 L477.5,286.6 L478.5,286.5 L479.5,286.5 L480.5,286.6 L481.5,286.7 L482.5,286.7 L483.5,286.7 L484.5,286.6 L485.5,286.5 L486.5,286.3 L487.5,285.8 L488.5,285.3 L489.5,284.6 L490.5,284.0 L491.5,283.6 L492.5,283.2 L493.5,283.1 L494.5,283.0 L495.5,283.3 L496.5,284.1 L497.5,285.2 L498.5,286.7 L499.5,288.4 L500.5,290.1 L501.5,291.9 L502.5,293.8 L503.5,295.7 L504.5,297.5 L505.5,299.1 L506.5,300.4 L507.5,301.5 L508.5,302.5 L509.5,303.4 L510.5,304.2 L511.5,305.0 L512.5,305.6 L513.5,306.1 L514.5,306.5 L515.5,306.7 L516.5,306.9 L517.5,307.0 L518.5,307.0 L519.5,306.9 L520.5,306.7 L521.5,306.4 L522.5,306.1 L523.5,305.7 L524.5,305.2 L525.5,304.7 L526.5,304.2 L527.5,303.5 L528.5,302.7 L529.5,301.7 L530.5,300.6 L531.5,299.4 L532.5,298.1 L533.5,296.6 L534.5,295.2 L535.5,293.8 L536.5,292.6 L537.5,291.5 L538.5,290.7 L539.5,290.1 L540.5,289.7 L541.5,289.5 L542.5,289.6 L543.5,289.7 L544.5,289.9 L545.5,290.2 L546.5,290.5 L547.5,290.7 L548.5,290.9 L549.5,291.0 L550.5,291.0 L551.5,290.9 L552.5,290.7 L553.5,290.5 L554.5,290.1 L555.5,289.6 L556.5,289.1 L557.5,288.7 L558.5,288.3 L559.5,288.1 L560.5,287.9 L561.5,287.9 L562.5,287.9 L563.5,288.1 L564.5,288.4 L565.5,288.8 L566.5,289.3 L567.5,289.9 L568.5,290.5 L569.5,291.2 L570.5,291.9 L571.5,292.6 L572.5,293.4 L573.5,294.2 L574.5,294.9 L575.5,295.6 L576.5,296.3 L577.5,297.0 L578.5,297.7 L579.5,298.3 L580.5,299.0 L581.5,299.6 L582.5,300.3 L583.5,300.9 L584.5,301.5 L585.5,302.2 L586.5,302.8 L587.5,303.4 L588.5,304.0 L589.5,304.6 L590.5,305.1 L591.5,305.7 L592.5,306.1 L593.5,306.6 L594.5,306.9 L595.5,307.3 L596.5,307.6 L597.5,307.9 L598.5,308.2 L599.5,308.5 L600.5,308.8 L601.5,309.1 L602.5,309.2 L603.5,309.1 L604.5,308.9 L605.5,308.5 L606.5,308.0 L607.5,307.4 L608.5,306.6 L609.5,305.7 L610.5,304.9 L611.5,304.1 L612.5,303.3 L613.5,302.6 L614.5,302.0 L615.5,301.5 L616.5,301.0 L617.5,300.6 L618.5,300.3 L619.5,299.9 L620.5,299.4 L621.5,298.8 L622.5,298.2 L623.5,297.4 L624.5,296.6 L625.5,295.7 L626.5,294.8 L627.5,293.7 L628.5,292.6 L629.5,291.5 L630.5,290.4 L631.5,289.4 L632.5,288.4 L633.5,287.5 L634.5,286.6 L635.5,285.8 L636.5,285.0 L637.5,284.3 L638.5,283.7 L639.5,283.1 L640.5,282.5 L641.5,282.1 L642.5,281.6 L643.5,281.2 L644.5,280.9" stroke="#e02a2a" stroke-width="0.7" fill="none"/>
<path d="M154.5,328.4 L154.5,327.1 L155.5,328.2 L156.5,328.2 L157.5,327.9 L158.5,328.6 L159.5,329.2 L160.5,329.9 L161.5,331.4 L162.5,332.1 L163.5,332.2 L164.5,332.8 L165.5,334.2 L166.5,334.5 L167.5,333.8 L168.5,333.4 L169.5,331.1 L170.5,329.3 L171.5,327.9 L172.5,326.2 L173.5,324.6 L174.5,323.0 L175.5,321.8 L176.5,320.7 L177.5,325.1 L178.5,328.1 L179.5,331.6 L180.5,334.1 L181.5,338.7 L182.5,341.2 L183.5,342.2 L184.5,341.3 L185.5,341.4 L186.5,340.1 L187.5,338.9 L188.5,338.4 L189.5,334.6 L190.5,333.7 L191.5,329.7 L192.5,324.7 L193.5,320.6 L194.5,319.4 L195.5,320.9 L196.5,324.1 L197.5,326.1 L198.5,327.8 L199.5,328.7 L200.5,329.9 L201.5,331.0 L202.5,332.1 L203.5,331.3 L204.5,333.1 L205.5,332.6 L206.5,332.2 L207.5,331.5 L208.5,331.6 L209.5,331.8 L210.5,331.6 L211.5,328.1 L212.5,327.1 L213.5,325.9 L214.5,321.7 L215.5,323.7 L216.5,323.7 L217.5,323.8 L218.5,325.1 L219.5,324.0 L220.5,325.2 L221.5,326.7 L222.5,326.5 L223.5,327.1 L224.5,328.1 L225.5,328.6 L226.5,329.2 L227.5,327.1 L228.5,327.4 L229.5,325.7 L230.5,326.9 L231.5,326.5 L232.5,325.2 L233.5,326.8 L234.5,326.3 L235.5,326.7 L236.5,327.9 L237.5,326.3 L238.5,326.1 L239.5,327.3 L240.5,326.3 L241.5,326.9 L242.5,326.0 L243.5,325.1 L244.5,325.3 L245.5,325.8 L246.5,326.3 L247.5,326.7 L248.5,327.6 L249.5,328.4 L250.5,329.0 L251.5,330.2 L252.5,328.5 L253.5,327.2 L254.5,327.0 L255.5,327.0 L256.5,327.6 L257.5,328.3 L258.5,329.2 L259.5,330.8 L260.5,331.0 L261.5,332.4 L262.5,333.8 L263.5,331.5 L264.5,330.5 L265.5,329.5 L266.5,327.7 L267.5,326.7 L268.5,328.7 L269.5,328.7 L270.5,328.9 L271.5,330.3 L272.5,330.9 L273.5,330.9 L274.5,331.7 L275.5,331.7 L276.5,330.9 L277.5,331.8 L278.5,330.6 L279.5,329.4 L280.5,327.6 L281.5,327.2 L282.5,326.2 L283.5,325.2 L284.5,326.3 L285.5,329.0 L286.5,329.8 L287.5,332.1 L288.5,334.8 L289.5,335.5 L290.5,335.2 L291.5,334.7 L292.5,332.6 L293.5,331.3 L294.5,330.2 L295.5,329.4 L296.5,326.2 L297.5,325.6 L298.5,324.2 L299.5,322.8 L300.5,321.6 L301.5,321.4 L302.5,323.6 L303.5,324.4 L304.5,326.4 L305.5,328.1 L306.5,328.7 L307.5,329.8 L308.5,331.4 L309.5,331.3 L310.5,331.4 L311.5,332.4 L312.5,332.6 L313.5,333.9 L314.5,333.6 L315.5,331.7 L316.5,331.0 L317.5,330.8 L318.5,328.9 L319.5,328.3 L320.5,326.6 L321.5,325.8 L322.5,325.0 L323.5,325.5 L324.5,324.2 L325.5,324.9 L326.5,325.7 L327.5,326.7 L328.5,327.9 L329.5,328.4 L330.5,330.0 L331.5,328.8 L332.5,329.3 L333.5,328.5 L334.5,328.5 L335.5,327.2 L336.5,327.7 L337.5,327.6 L338.5,326.7 L339.5,324.6 L340.5,325.3 L341.5,323.6 L342.5,322.6 L343.5,323.8 L344.5,325.5 L345.5,327.5 L346.5,328.2 L347.5,330.0 L348.5,332.4 L349.5,334.0 L350.5,335.1 L351.5,335.6 L352.5,336.1 L353.5,337.1 L354.5,338.4 L355.5,337.8 L356.5,339.8 L357.5,338.8 L358.5,337.3 L359.5,337.2 L360.5,335.2 L361.5,334.3 L362.5,335.4 L363.5,336.9 L364.5,337.9 L365.5,338.2 L366.5,333.5 L367.5,327.3 L368.5,324.1 L369.5,322.1 L370.5,321.6 L371.5,320.9 L372.5,319.6 L373.5,318.5 L374.5,317.8 L375.5,317.5 L376.5,316.9 L377.5,317.4 L378.5,317.7 L379.5,319.0 L380.5,320.0 L381.5,321.9 L382.5,321.7 L383.5,324.7 L384.5,324.9 L385.5,325.9 L386.5,328.2 L387.5,330.5 L388.5,331.9 L389.5,334.2 L390.5,335.5 L391.5,337.9 L392.5,339.8 L393.5,339.0 L394.5,336.8 L395.5,333.2 L396.5,330.2 L397.5,326.7 L398.5,324.6 L399.5,324.0 L400.5,321.6 L401.5,321.5 L402.5,320.2 L403.5,318.9 L404.5,316.4 L405.5,319.1 L406.5,321.1 L407.5,321.9 L408.5,324.0 L409.5,324.2 L410.5,327.5 L411.5,328.0 L412.5,329.8 L413.5,329.4 L414.5,331.8 L415.5,330.3 L416.5,329.8 L417.5,327.9 L418.5,327.5 L419.5,330.5 L420.5,330.2 L421.5,331.7 L422.5,333.3 L423.5,334.3 L424.5,336.9 L425.5,336.2 L426.5,333.7 L427.5,331.9 L428.5,332.2 L429.5,330.9 L430.5,329.8 L431.5,328.9 L432.5,326.8 L433.5,326.4 L434.5,327.1 L435.5,328.4 L436.5,331.0 L437.5,330.7 L438.5,331.1 L439.5,328.6 L440.5,327.0 L441.5,326.6 L442.5,325.9 L443.5,324.0 L444.5,321.8 L445.5,323.3 L446.5,325.2 L447.5,325.5 L448.5,326.7 L449.5,329.1 L450.5,328.5 L451.5,327.2 L452.5,326.9 L453.5,326.0 L454.5,326.0 L455.5,325.9 L456.5,326.8 L457.5,326.8 L458.5,325.9 L459.5,327.3 L460.5,327.9 L461.5,328.0 L462.5,328.7 L463.5,328.3 L464.5,328.5 L465.5,329.9 L466.5,329.2 L467.5,328.9 L468.5,329.8 L469.5,327.9 L470.5,327.3 L471.5,325.8 L472.5,324.9 L473.5,324.1 L474.5,326.0 L475.5,328.4 L476.5,328.9 L477.5,332.5 L478.5,332.2 L479.5,331.2 L480.5,331.0 L481.5,329.5 L482.5,327.6 L483.5,328.3 L484.5,325.5 L485.5,324.9 L486.5,323.7 L487.5,323.1 L488.5,322.1 L489.5,324.3 L490.5,324.6 L491.5,327.0 L492.5,327.1 L493.5,328.3 L494.5,330.8 L495.5,334.0 L496.5,337.9 L497.5,343.0 L498.5,346.0 L499.5,349.4 L500.5,347.5 L501.5,342.9 L502.5,340.7 L503.5,337.3 L504.5,332.8 L505.5,329.3 L506.5,328.3 L507.5,329.8 L508.5,330.9 L509.5,333.3 L510.5,333.5 L511.5,335.3 L512.5,333.6 L513.5,331.9 L514.5,330.5 L515.5,328.0 L516.5,327.2 L517.5,326.6 L518.5,326.0 L519.5,325.4 L520.5,325.2 L521.5,325.8 L522.5,324.9 L523.5,325.2 L524.5,325.5 L525.5,325.2 L526.5,325.3 L527.5,323.3 L528.5,321.6 L529.5,321.4 L530.5,319.6 L531.5,318.7 L532.5,316.8 L533.5,316.8 L534.5,318.8 L535.5,320.8 L536.5,322.9 L537.5,325.0 L538.5,327.0 L539.5,328.3 L540.5,329.9 L541.5,330.3 L542.5,332.8 L543.5,333.0 L544.5,332.9 L545.5,331.1 L546.5,329.8 L547.5,329.9 L548.5,327.4 L549.5,325.7 L550.5,325.3 L551.5,325.6 L552.5,327.1 L553.5,326.2 L554.5,326.7 L555.5,325.8 L556.5,326.7 L557.5,327.0 L558.5,327.8 L559.5,326.8 L560.5,329.0 L561.5,330.4 L562.5,331.2 L563.5,333.2 L564.5,334.5 L565.5,333.5 L566.5,335.3 L567.5,335.5 L568.5,335.2 L569.5,334.9 L570.5,336.6 L571.5,335.8 L572.5,335.8 L573.5,335.6 L574.5,334.2 L575.5,334.5 L576.5,333.5 L577.5,333.2 L578.5,332.8 L579.5,333.0 L580.5,333.9 L581.5,333.6 L582.5,333.8 L583.5,334.0 L584.5,334.6 L585.5,333.8 L586.5,332.8 L587.5,331.8 L588.5,330.4 L589.5,329.4 L590.5,328.0 L591.5,328.2 L592.5,328.8 L593.5,329.8 L594.5,331.0 L595.5,333.7 L596.5,334.2 L597.5,334.0 L598.5,333.3 L599.5,332.4 L600.5,332.1 L601.5,330.3 L602.5,330.6 L603.5,327.9 L604.5,327.3 L605.5,324.9 L606.5,325.0 L607.5,322.4 L608.5,321.1 L609.5,320.1 L610.5,318.9 L611.5,317.4 L612.5,319.7 L613.5,321.0 L614.5,323.7 L615.5,325.4 L616.5,326.6 L617.5,325.7 L618.5,325.2 L619.5,324.4 L620.5,324.4 L621.5,324.3 L622.5,321.7 L623.5,322.0 L624.5,321.4 L625.5,321.6 L626.5,320.5 L627.5,320.7 L628.5,319.9 L629.5,320.6 L630.5,320.0 L631.5,321.4 L632.5,323.5 L633.5,325.0 L634.5,326.0 L635.5,325.7 L636.5,323.9 L637.5,323.2 L638.5,324.5 L639.5,325.3 L640.5,324.7 L641.5,325.5 L642.5,327.4 L643.5,328.0 L644.5,327.5 L644.5,328.4 Z" fill="#c8c8c8"/>
<path d="M154.5,362.5 L155.5,364.0 L156.5,365.1 L157.5,364.7 L158.5,367.5 L159.5,366.8 L160.5,369.0 L161.5,375.5 L162.5,377.5 L163.5,382.1 L164.5,386.9 L165.5,385.1 L166.5,381.1 L167.5,378.9 L168.5,375.3 L169.5,375.5 L170.5,371.2 L171.5,366.1 L172.5,364.5 L173.5,373.1 L174.5,373.1 L175.5,368.2 L176.5,362.5 L177.5,368.0 L178.5,376.2 L179.5,378.6 L180.5,380.3 L181.5,380.0 L182.5,383.0 L183.5,379.9 L184.5,377.3 L185.5,379.1 L186.5,380.1 L187.5,378.5 L188.5,379.0 L189.5,379.7 L190.5,379.7 L191.5,374.4 L192.5,368.9 L193.5,366.3 L194.5,363.1 L195.5,365.9 L196.5,367.6 L197.5,371.0 L198.5,375.5 L199.5,374.6 L200.5,376.7 L201.5,377.9 L202.5,376.8 L203.5,377.8 L204.5,376.8 L205.5,381.2 L206.5,382.5 L207.5,383.0 L208.5,382.1 L209.5,383.0 L210.5,381.9 L211.5,379.2 L212.5,374.0 L213.5,371.6 L214.5,366.8 L215.5,366.9 L216.5,366.8 L217.5,367.0 L218.5,364.4 L219.5,367.0 L220.5,367.1 L221.5,363.8 L222.5,367.4 L223.5,375.1 L224.5,379.5 L225.5,383.1 L226.5,379.8 L227.5,370.4 L228.5,364.9 L229.5,369.1 L230.5,367.7 L231.5,367.7 L232.5,369.7 L233.5,368.8 L234.5,368.7 L235.5,369.7 L236.5,368.1 L237.5,367.8 L238.5,370.0 L239.5,368.4 L240.5,366.1 L241.5,363.6 L242.5,361.3 L243.5,360.3 L244.5,356.3 L245.5,363.0 L246.5,364.0 L247.5,369.3 L248.5,370.4 L249.5,369.7 L250.5,368.7 L251.5,367.8 L252.5,363.3 L253.5,362.1 L254.5,359.7 L255.5,361.2 L256.5,362.6 L257.5,366.1 L258.5,366.1 L259.5,370.9 L260.5,373.5 L261.5,375.3 L262.5,375.6 L263.5,372.9 L264.5,374.5 L265.5,368.4 L266.5,369.6 L267.5,368.0 L268.5,369.2 L269.5,370.6 L270.5,375.5 L271.5,378.5 L272.5,377.2 L273.5,380.0 L274.5,383.6 L275.5,380.9 L276.5,380.1 L277.5,374.2 L278.5,372.7 L279.5,367.8 L280.5,369.0 L281.5,364.6 L282.5,363.7 L283.5,367.0 L284.5,367.8 L285.5,371.0 L286.5,369.1 L287.5,371.6 L288.5,379.4 L289.5,387.6 L290.5,385.8 L291.5,384.4 L292.5,381.1 L293.5,377.4 L294.5,375.1 L295.5,372.4 L296.5,368.5 L297.5,368.3 L298.5,362.5 L299.5,366.0 L300.5,366.6 L301.5,366.1 L302.5,366.1 L303.5,367.5 L304.5,369.1 L305.5,371.1 L306.5,372.7 L307.5,375.8 L308.5,376.1 L309.5,379.3 L310.5,379.3 L311.5,383.6 L312.5,382.9 L313.5,380.5 L314.5,380.8 L315.5,378.6 L316.5,372.5 L317.5,373.3 L318.5,369.0 L319.5,369.4 L320.5,368.5 L321.5,362.3 L322.5,360.4 L323.5,362.3 L324.5,365.8 L325.5,368.9 L326.5,372.4 L327.5,372.4 L328.5,374.6 L329.5,370.3 L330.5,370.4 L331.5,370.2 L332.5,368.3 L333.5,365.0 L334.5,364.0 L335.5,364.1 L336.5,367.1 L337.5,371.1 L338.5,366.2 L339.5,365.4 L340.5,362.5 L341.5,359.5 L342.5,362.4 L343.5,366.7 L344.5,368.4 L345.5,371.9 L346.5,374.6 L347.5,377.3 L348.5,374.1 L349.5,379.1 L350.5,378.5 L351.5,379.7 L352.5,379.5 L353.5,378.9 L354.5,381.2 L355.5,381.3 L356.5,383.2 L357.5,380.6 L358.5,383.8 L359.5,382.1 L360.5,381.1 L361.5,380.2 L362.5,379.8 L363.5,379.1 L364.5,381.7 L365.5,388.6 L366.5,384.7 L367.5,379.6 L368.5,377.3 L369.5,372.8 L370.5,370.4 L371.5,371.2 L372.5,368.5 L373.5,366.2 L374.5,363.4 L375.5,362.5 L376.5,360.9 L377.5,364.2 L378.5,363.4 L379.5,365.4 L380.5,365.6 L381.5,367.5 L382.5,370.1 L383.5,367.2 L384.5,366.0 L385.5,363.8 L386.5,364.1 L387.5,365.3 L388.5,370.8 L389.5,376.1 L390.5,381.7 L391.5,383.0 L392.5,383.7 L393.5,377.6 L394.5,378.1 L395.5,375.5 L396.5,372.1 L397.5,371.0 L398.5,368.7 L399.5,365.9 L400.5,366.7 L401.5,362.1 L402.5,365.4 L403.5,365.9 L404.5,365.4 L405.5,366.8 L406.5,368.2 L407.5,367.9 L408.5,368.8 L409.5,369.7 L410.5,367.8 L411.5,373.3 L412.5,375.6 L413.5,373.7 L414.5,366.7 L415.5,356.7 L416.5,358.5 L417.5,360.9 L418.5,364.5 L419.5,369.6 L420.5,370.8 L421.5,375.2 L422.5,376.9 L423.5,382.3 L424.5,380.4 L425.5,377.3 L426.5,375.1 L427.5,376.1 L428.5,370.2 L429.5,368.2 L430.5,366.3 L431.5,369.0 L432.5,372.1 L433.5,372.0 L434.5,372.7 L435.5,375.1 L436.5,376.4 L437.5,371.9 L438.5,372.6 L439.5,370.4 L440.5,366.6 L441.5,365.2 L442.5,363.1 L443.5,362.0 L444.5,361.4 L445.5,366.6 L446.5,367.2 L447.5,369.3 L448.5,372.8 L449.5,370.2 L450.5,367.0 L451.5,364.1 L452.5,362.6 L453.5,363.3 L454.5,366.0 L455.5,367.1 L456.5,370.4 L457.5,370.6 L458.5,369.1 L459.5,367.5 L460.5,363.8 L461.5,363.7 L462.5,367.4 L463.5,369.4 L464.5,371.0 L465.5,375.1 L466.5,375.0 L467.5,372.7 L468.5,367.7 L469.5,363.6 L470.5,360.4 L471.5,357.9 L472.5,359.1 L473.5,361.2 L474.5,364.3 L475.5,365.9 L476.5,369.6 L477.5,371.8 L478.5,375.4 L479.5,371.9 L480.5,369.2 L481.5,365.1 L482.5,365.9 L483.5,368.5 L484.5,367.4 L485.5,363.4 L486.5,364.1 L487.5,361.8 L488.5,361.6 L489.5,365.0 L490.5,364.8 L491.5,368.8 L492.5,369.1 L493.5,370.4 L494.5,373.0 L495.5,374.6 L496.5,380.1 L497.5,385.1 L498.5,388.6 L499.5,386.1 L500.5,380.7 L501.5,383.4 L502.5,379.3 L503.5,380.1 L504.5,379.5 L505.5,376.8 L506.5,374.3 L507.5,373.7 L508.5,380.3 L509.5,386.3 L510.5,388.1 L511.5,385.0 L512.5,384.8 L513.5,380.6 L514.5,379.0 L515.5,376.1 L516.5,378.2 L517.5,379.5 L518.5,382.0 L519.5,382.8 L520.5,380.4 L521.5,377.8 L522.5,376.0 L523.5,377.4 L524.5,373.4 L525.5,371.8 L526.5,371.3 L527.5,368.0 L528.5,364.6 L529.5,360.7 L530.5,361.2 L531.5,360.1 L532.5,362.5 L533.5,363.8 L534.5,364.6 L535.5,366.9 L536.5,371.4 L537.5,373.9 L538.5,375.6 L539.5,377.0 L540.5,379.2 L541.5,383.0 L542.5,384.2 L543.5,389.5 L544.5,385.9 L545.5,382.4 L546.5,374.6 L547.5,367.4 L548.5,361.5 L549.5,357.6 L550.5,363.4 L551.5,366.2 L552.5,369.9 L553.5,369.0 L554.5,367.3 L555.5,365.2 L556.5,364.1 L557.5,365.9 L558.5,364.4 L559.5,366.6 L560.5,367.0 L561.5,372.1 L562.5,375.1 L563.5,379.1 L564.5,380.8 L565.5,380.8 L566.5,378.6 L567.5,377.3 L568.5,376.0 L569.5,378.3 L570.5,378.7 L571.5,381.7 L572.5,382.5 L573.5,383.3 L574.5,382.6 L575.5,381.2 L576.5,381.7 L577.5,379.4 L578.5,379.1 L579.5,378.8 L580.5,378.5 L581.5,382.4 L582.5,381.0 L583.5,384.1 L584.5,383.6 L585.5,380.1 L586.5,380.0 L587.5,379.5 L588.5,378.1 L589.5,376.7 L590.5,378.0 L591.5,375.8 L592.5,378.8 L593.5,380.8 L594.5,384.7 L595.5,386.4 L596.5,386.1 L597.5,385.2 L598.5,382.9 L599.5,380.7 L600.5,378.3 L601.5,378.2 L602.5,377.5 L603.5,376.5 L604.5,375.7 L605.5,377.0 L606.5,379.1 L607.5,374.4 L608.5,371.6 L609.5,368.0 L610.5,360.8 L611.5,363.3 L612.5,365.9 L613.5,372.1 L614.5,373.8 L615.5,375.1 L616.5,376.0 L617.5,376.7 L618.5,376.1 L619.5,377.0 L620.5,374.3 L621.5,371.6 L622.5,368.6 L623.5,365.9 L624.5,360.3 L625.5,359.1 L626.5,361.8 L627.5,363.2 L628.5,365.5 L629.5,366.4 L630.5,366.6 L631.5,366.1 L632.5,364.7 L633.5,363.6 L634.5,362.2 L635.5,359.7 L636.5,359.1 L637.5,362.3 L638.5,362.1 L639.5,366.1 L640.5,367.5 L641.5,365.9 L642.5,368.4 L643.5,368.3 L644.5,367.1" stroke="#1e8e8a" stroke-width="0.85" fill="none"/>
<path d="M154.5,417.7 L154.0,407.4 L155.0,407.4 L155.0,408.3 L156.0,408.3 L156.0,413.4 L157.0,413.4 L157.0,411.5 L158.0,411.5 L158.0,413.2 L159.0,413.2 L159.0,414.3 L160.0,414.3 L160.0,415.2 L161.0,415.2 L161.0,416.7 L162.0,416.7 L162.0,416.9 L163.0,416.9 L163.0,417.3 L164.0,417.3 L164.0,417.5 L165.0,417.5 L165.0,417.3 L166.0,417.3 L166.0,416.7 L167.0,416.7 L167.0,415.9 L168.0,415.9 L168.0,413.9 L169.0,413.9 L169.0,413.6 L170.0,413.6 L170.0,412.4 L171.0,412.4 L171.0,414.5 L172.0,414.5 L172.0,412.6 L173.0,412.6 L173.0,409.0 L174.0,409.0 L174.0,403.2 L175.0,403.2 L175.0,402.5 L176.0,402.5 L176.0,397.4 L177.0,397.4 L177.0,404.2 L178.0,404.2 L178.0,413.1 L179.0,413.1 L179.0,419.8 L180.0,419.8 L180.0,423.6 L181.0,423.6 L181.0,422.6 L182.0,422.6 L182.0,424.9 L183.0,424.9 L183.0,424.4 L184.0,424.4 L184.0,424.6 L185.0,424.6 L185.0,425.2 L186.0,425.2 L186.0,426.8 L187.0,426.8 L187.0,427.6 L188.0,427.6 L188.0,423.0 L189.0,423.0 L189.0,420.0 L190.0,420.0 L190.0,419.3 L191.0,419.3 L191.0,418.3 L192.0,418.3 L192.0,416.1 L193.0,416.1 L193.0,410.2 L194.0,410.2 L194.0,411.9 L195.0,411.9 L195.0,405.8 L196.0,405.8 L196.0,409.9 L197.0,409.9 L197.0,416.0 L198.0,416.0 L198.0,418.1 L199.0,418.1 L199.0,418.6 L200.0,418.6 L200.0,420.3 L201.0,420.3 L201.0,420.4 L202.0,420.4 L202.0,419.0 L203.0,419.0 L203.0,419.4 L204.0,419.4 L204.0,418.6 L205.0,418.6 L205.0,418.5 L206.0,418.5 L206.0,418.8 L207.0,418.8 L207.0,418.9 L208.0,418.9 L208.0,420.9 L209.0,420.9 L209.0,420.1 L210.0,420.1 L210.0,416.4 L211.0,416.4 L211.0,414.8 L212.0,414.8 L212.0,411.2 L213.0,411.2 L213.0,410.3 L214.0,410.3 L214.0,414.8 L215.0,414.8 L215.0,412.1 L216.0,412.1 L216.0,414.2 L217.0,414.2 L217.0,411.9 L218.0,411.9 L218.0,413.5 L219.0,413.5 L219.0,414.1 L220.0,414.1 L220.0,413.0 L221.0,413.0 L221.0,413.5 L222.0,413.5 L222.0,414.4 L223.0,414.4 L223.0,414.2 L224.0,414.2 L224.0,416.3 L225.0,416.3 L225.0,417.6 L226.0,417.6 L226.0,406.7 L227.0,406.7 L227.0,409.2 L228.0,409.2 L228.0,410.9 L229.0,410.9 L229.0,410.7 L230.0,410.7 L230.0,414.3 L231.0,414.3 L231.0,414.3 L232.0,414.3 L232.0,413.5 L233.0,413.5 L233.0,413.7 L234.0,413.7 L234.0,413.2 L235.0,413.2 L235.0,412.4 L236.0,412.4 L236.0,414.1 L237.0,414.1 L237.0,413.4 L238.0,413.4 L238.0,413.2 L239.0,413.2 L239.0,414.3 L240.0,414.3 L240.0,412.5 L241.0,412.5 L241.0,413.4 L242.0,413.4 L242.0,410.4 L243.0,410.4 L243.0,410.6 L244.0,410.6 L244.0,410.8 L245.0,410.8 L245.0,412.5 L246.0,412.5 L246.0,411.1 L247.0,411.1 L247.0,413.4 L248.0,413.4 L248.0,413.3 L249.0,413.3 L249.0,415.3 L250.0,415.3 L250.0,414.6 L251.0,414.6 L251.0,411.7 L252.0,411.7 L252.0,410.4 L253.0,410.4 L253.0,411.1 L254.0,411.1 L254.0,406.7 L255.0,406.7 L255.0,409.8 L256.0,409.8 L256.0,410.2 L257.0,410.2 L257.0,409.9 L258.0,409.9 L258.0,411.7 L259.0,411.7 L259.0,411.5 L260.0,411.5 L260.0,411.5 L261.0,411.5 L261.0,409.1 L262.0,409.1 L262.0,408.8 L263.0,408.8 L263.0,411.2 L264.0,411.2 L264.0,408.0 L265.0,408.0 L265.0,410.4 L266.0,410.4 L266.0,410.2 L267.0,410.2 L267.0,410.7 L268.0,410.7 L268.0,412.5 L269.0,412.5 L269.0,411.7 L270.0,411.7 L270.0,414.6 L271.0,414.6 L271.0,416.2 L272.0,416.2 L272.0,416.0 L273.0,416.0 L273.0,417.2 L274.0,417.2 L274.0,417.9 L275.0,417.9 L275.0,418.1 L276.0,418.1 L276.0,418.6 L277.0,418.6 L277.0,417.3 L278.0,417.3 L278.0,416.2 L279.0,416.2 L279.0,414.9 L280.0,414.9 L280.0,413.2 L281.0,413.2 L281.0,413.7 L282.0,413.7 L282.0,412.2 L283.0,412.2 L283.0,413.5 L284.0,413.5 L284.0,412.6 L285.0,412.6 L285.0,410.2 L286.0,410.2 L286.0,412.3 L287.0,412.3 L287.0,416.1 L288.0,416.1 L288.0,418.1 L289.0,418.1 L289.0,420.6 L290.0,420.6 L290.0,420.2 L291.0,420.2 L291.0,420.0 L292.0,420.0 L292.0,418.7 L293.0,418.7 L293.0,417.8 L294.0,417.8 L294.0,417.0 L295.0,417.0 L295.0,415.1 L296.0,415.1 L296.0,415.8 L297.0,415.8 L297.0,413.6 L298.0,413.6 L298.0,412.1 L299.0,412.1 L299.0,411.0 L300.0,411.0 L300.0,412.7 L301.0,412.7 L301.0,411.2 L302.0,411.2 L302.0,411.9 L303.0,411.9 L303.0,412.6 L304.0,412.6 L304.0,415.1 L305.0,415.1 L305.0,416.1 L306.0,416.1 L306.0,415.8 L307.0,415.8 L307.0,416.5 L308.0,416.5 L308.0,417.3 L309.0,417.3 L309.0,417.9 L310.0,417.9 L310.0,418.7 L311.0,418.7 L311.0,419.2 L312.0,419.2 L312.0,420.0 L313.0,420.0 L313.0,419.4 L314.0,419.4 L314.0,419.3 L315.0,419.3 L315.0,418.0 L316.0,418.0 L316.0,416.9 L317.0,416.9 L317.0,415.2 L318.0,415.2 L318.0,414.1 L319.0,414.1 L319.0,413.3 L320.0,413.3 L320.0,411.2 L321.0,411.2 L321.0,412.7 L322.0,412.7 L322.0,409.4 L323.0,409.4 L323.0,407.2 L324.0,407.2 L324.0,408.1 L325.0,408.1 L325.0,408.6 L326.0,408.6 L326.0,413.5 L327.0,413.5 L327.0,415.0 L328.0,415.0 L328.0,413.6 L329.0,413.6 L329.0,413.2 L330.0,413.2 L330.0,411.5 L331.0,411.5 L331.0,412.7 L332.0,412.7 L332.0,414.0 L333.0,414.0 L333.0,412.1 L334.0,412.1 L334.0,413.7 L335.0,413.7 L335.0,414.5 L336.0,414.5 L336.0,411.2 L337.0,411.2 L337.0,414.0 L338.0,414.0 L338.0,414.4 L339.0,414.4 L339.0,413.7 L340.0,413.7 L340.0,409.9 L341.0,409.9 L341.0,409.6 L342.0,409.6 L342.0,405.4 L343.0,405.4 L343.0,410.7 L344.0,410.7 L344.0,412.4 L345.0,412.4 L345.0,409.4 L346.0,409.4 L346.0,411.1 L347.0,411.1 L347.0,416.8 L348.0,416.8 L348.0,418.7 L349.0,418.7 L349.0,419.4 L350.0,419.4 L350.0,419.6 L351.0,419.6 L351.0,421.6 L352.0,421.6 L352.0,421.8 L353.0,421.8 L353.0,422.0 L354.0,422.0 L354.0,422.1 L355.0,422.1 L355.0,422.9 L356.0,422.9 L356.0,422.6 L357.0,422.6 L357.0,423.0 L358.0,423.0 L358.0,421.2 L359.0,421.2 L359.0,423.1 L360.0,423.1 L360.0,425.2 L361.0,425.2 L361.0,422.6 L362.0,422.6 L362.0,423.6 L363.0,423.6 L363.0,425.6 L364.0,425.6 L364.0,426.3 L365.0,426.3 L365.0,425.9 L366.0,425.9 L366.0,419.6 L367.0,419.6 L367.0,416.3 L368.0,416.3 L368.0,414.0 L369.0,414.0 L369.0,413.1 L370.0,413.1 L370.0,410.8 L371.0,410.8 L371.0,411.5 L372.0,411.5 L372.0,409.2 L373.0,409.2 L373.0,405.3 L374.0,405.3 L374.0,408.0 L375.0,408.0 L375.0,407.5 L376.0,407.5 L376.0,411.4 L377.0,411.4 L377.0,411.9 L378.0,411.9 L378.0,413.3 L379.0,413.3 L379.0,413.5 L380.0,413.5 L380.0,414.8 L381.0,414.8 L381.0,411.6 L382.0,411.6 L382.0,407.7 L383.0,407.7 L383.0,409.4 L384.0,409.4 L384.0,412.3 L385.0,412.3 L385.0,414.2 L386.0,414.2 L386.0,415.3 L387.0,415.3 L387.0,417.8 L388.0,417.8 L388.0,420.3 L389.0,420.3 L389.0,422.7 L390.0,422.7 L390.0,423.3 L391.0,423.3 L391.0,423.9 L392.0,423.9 L392.0,420.7 L393.0,420.7 L393.0,422.8 L394.0,422.8 L394.0,420.7 L395.0,420.7 L395.0,419.0 L396.0,419.0 L396.0,417.4 L397.0,417.4 L397.0,415.1 L398.0,415.1 L398.0,415.2 L399.0,415.2 L399.0,413.0 L400.0,413.0 L400.0,409.3 L401.0,409.3 L401.0,408.9 L402.0,408.9 L402.0,408.6 L403.0,408.6 L403.0,403.6 L404.0,403.6 L404.0,407.6 L405.0,407.6 L405.0,405.2 L406.0,405.2 L406.0,408.5 L407.0,408.5 L407.0,410.4 L408.0,410.4 L408.0,409.3 L409.0,409.3 L409.0,412.8 L410.0,412.8 L410.0,408.8 L411.0,408.8 L411.0,412.2 L412.0,412.2 L412.0,408.6 L413.0,408.6 L413.0,412.9 L414.0,412.9 L414.0,410.6 L415.0,410.6 L415.0,413.1 L416.0,413.1 L416.0,413.6 L417.0,413.6 L417.0,412.5 L418.0,412.5 L418.0,412.8 L419.0,412.8 L419.0,415.2 L420.0,415.2 L420.0,414.3 L421.0,414.3 L421.0,416.1 L422.0,416.1 L422.0,416.5 L423.0,416.5 L423.0,417.3 L424.0,417.3 L424.0,418.2 L425.0,418.2 L425.0,417.5 L426.0,417.5 L426.0,416.2 L427.0,416.2 L427.0,415.5 L428.0,415.5 L428.0,415.1 L429.0,415.1 L429.0,414.8 L430.0,414.8 L430.0,415.7 L431.0,415.7 L431.0,415.9 L432.0,415.9 L432.0,415.5 L433.0,415.5 L433.0,416.5 L434.0,416.5 L434.0,417.2 L435.0,417.2 L435.0,416.5 L436.0,416.5 L436.0,414.4 L437.0,414.4 L437.0,414.4 L438.0,414.4 L438.0,413.7 L439.0,413.7 L439.0,410.3 L440.0,410.3 L440.0,410.2 L441.0,410.2 L441.0,409.7 L442.0,409.7 L442.0,409.9 L443.0,409.9 L443.0,411.0 L444.0,411.0 L444.0,411.1 L445.0,411.1 L445.0,410.9 L446.0,410.9 L446.0,411.7 L447.0,411.7 L447.0,412.2 L448.0,412.2 L448.0,413.4 L449.0,413.4 L449.0,412.7 L450.0,412.7 L450.0,411.7 L451.0,411.7 L451.0,412.5 L452.0,412.5 L452.0,413.7 L453.0,413.7 L453.0,410.5 L454.0,410.5 L454.0,410.9 L455.0,410.9 L455.0,409.9 L456.0,409.9 L456.0,408.7 L457.0,408.7 L457.0,410.4 L458.0,410.4 L458.0,409.7 L459.0,409.7 L459.0,406.8 L460.0,406.8 L460.0,406.7 L461.0,406.7 L461.0,409.4 L462.0,409.4 L462.0,408.0 L463.0,408.0 L463.0,410.4 L464.0,410.4 L464.0,412.5 L465.0,412.5 L465.0,411.9 L466.0,411.9 L466.0,410.3 L467.0,410.3 L467.0,412.6 L468.0,412.6 L468.0,409.2 L469.0,409.2 L469.0,407.9 L470.0,407.9 L470.0,406.7 L471.0,406.7 L471.0,410.4 L472.0,410.4 L472.0,404.5 L473.0,404.5 L473.0,408.1 L474.0,408.1 L474.0,408.6 L475.0,408.6 L475.0,408.3 L476.0,408.3 L476.0,407.3 L477.0,407.3 L477.0,411.5 L478.0,411.5 L478.0,414.8 L479.0,414.8 L479.0,414.1 L480.0,414.1 L480.0,413.9 L481.0,413.9 L481.0,413.0 L482.0,413.0 L482.0,408.5 L483.0,408.5 L483.0,407.8 L484.0,407.8 L484.0,406.7 L485.0,406.7 L485.0,410.7 L486.0,410.7 L486.0,405.9 L487.0,405.9 L487.0,398.6 L488.0,398.6 L488.0,395.2 L489.0,395.2 L489.0,412.5 L490.0,412.5 L490.0,409.1 L491.0,409.1 L491.0,409.1 L492.0,409.1 L492.0,412.3 L493.0,412.3 L493.0,412.4 L494.0,412.4 L494.0,412.4 L495.0,412.4 L495.0,415.7 L496.0,415.7 L496.0,417.9 L497.0,417.9 L497.0,420.9 L498.0,420.9 L498.0,424.9 L499.0,424.9 L499.0,432.2 L500.0,432.2 L500.0,426.2 L501.0,426.2 L501.0,425.4 L502.0,425.4 L502.0,424.1 L503.0,424.1 L503.0,419.9 L504.0,419.9 L504.0,417.6 L505.0,417.6 L505.0,414.4 L506.0,414.4 L506.0,415.0 L507.0,415.0 L507.0,420.3 L508.0,420.3 L508.0,419.8 L509.0,419.8 L509.0,421.9 L510.0,421.9 L510.0,423.6 L511.0,423.6 L511.0,425.6 L512.0,425.6 L512.0,424.1 L513.0,424.1 L513.0,420.7 L514.0,420.7 L514.0,419.3 L515.0,419.3 L515.0,419.2 L516.0,419.2 L516.0,418.5 L517.0,418.5 L517.0,418.4 L518.0,418.4 L518.0,417.9 L519.0,417.9 L519.0,417.5 L520.0,417.5 L520.0,417.1 L521.0,417.1 L521.0,416.9 L522.0,416.9 L522.0,416.7 L523.0,416.7 L523.0,416.1 L524.0,416.1 L524.0,416.3 L525.0,416.3 L525.0,415.6 L526.0,415.6 L526.0,415.2 L527.0,415.2 L527.0,412.7 L528.0,412.7 L528.0,412.3 L529.0,412.3 L529.0,411.3 L530.0,411.3 L530.0,411.0 L531.0,411.0 L531.0,409.4 L532.0,409.4 L532.0,406.5 L533.0,406.5 L533.0,408.2 L534.0,408.2 L534.0,406.9 L535.0,406.9 L535.0,411.5 L536.0,411.5 L536.0,410.5 L537.0,410.5 L537.0,413.0 L538.0,413.0 L538.0,414.6 L539.0,414.6 L539.0,416.1 L540.0,416.1 L540.0,415.8 L541.0,415.8 L541.0,414.8 L542.0,414.8 L542.0,414.7 L543.0,414.7 L543.0,415.5 L544.0,415.5 L544.0,415.5 L545.0,415.5 L545.0,415.7 L546.0,415.7 L546.0,414.9 L547.0,414.9 L547.0,414.4 L548.0,414.4 L548.0,412.0 L549.0,412.0 L549.0,411.7 L550.0,411.7 L550.0,411.6 L551.0,411.6 L551.0,411.0 L552.0,411.0 L552.0,408.7 L553.0,408.7 L553.0,409.4 L554.0,409.4 L554.0,412.0 L555.0,412.0 L555.0,409.2 L556.0,409.2 L556.0,412.1 L557.0,412.1 L557.0,413.1 L558.0,413.1 L558.0,412.7 L559.0,412.7 L559.0,414.0 L560.0,414.0 L560.0,415.1 L561.0,415.1 L561.0,415.2 L562.0,415.2 L562.0,416.3 L563.0,416.3 L563.0,416.5 L564.0,416.5 L564.0,417.2 L565.0,417.2 L565.0,417.0 L566.0,417.0 L566.0,417.6 L567.0,417.6 L567.0,418.0 L568.0,418.0 L568.0,418.2 L569.0,418.2 L569.0,418.5 L570.0,418.5 L570.0,419.1 L571.0,419.1 L571.0,419.6 L572.0,419.6 L572.0,420.2 L573.0,420.2 L573.0,421.3 L574.0,421.3 L574.0,421.0 L575.0,421.0 L575.0,421.8 L576.0,421.8 L576.0,421.0 L577.0,421.0 L577.0,422.6 L578.0,422.6 L578.0,422.5 L579.0,422.5 L579.0,422.2 L580.0,422.2 L580.0,423.0 L581.0,423.0 L581.0,423.4 L582.0,423.4 L582.0,424.2 L583.0,424.2 L583.0,424.9 L584.0,424.9 L584.0,423.9 L585.0,423.9 L585.0,423.5 L586.0,423.5 L586.0,424.3 L587.0,424.3 L587.0,420.5 L588.0,420.5 L588.0,420.4 L589.0,420.4 L589.0,420.3 L590.0,420.3 L590.0,418.0 L591.0,418.0 L591.0,418.9 L592.0,418.9 L592.0,420.1 L593.0,420.1 L593.0,419.4 L594.0,419.4 L594.0,422.8 L595.0,422.8 L595.0,419.4 L596.0,419.4 L596.0,423.6 L597.0,423.6 L597.0,423.6 L598.0,423.6 L598.0,422.4 L599.0,422.4 L599.0,420.9 L600.0,420.9 L600.0,420.8 L601.0,420.8 L601.0,419.6 L602.0,419.6 L602.0,419.9 L603.0,419.9 L603.0,418.7 L604.0,418.7 L604.0,418.5 L605.0,418.5 L605.0,417.4 L606.0,417.4 L606.0,416.6 L607.0,416.6 L607.0,415.2 L608.0,415.2 L608.0,413.7 L609.0,413.7 L609.0,414.1 L610.0,414.1 L610.0,409.8 L611.0,409.8 L611.0,410.8 L612.0,410.8 L612.0,414.3 L613.0,414.3 L613.0,414.1 L614.0,414.1 L614.0,415.9 L615.0,415.9 L615.0,417.0 L616.0,417.0 L616.0,417.8 L617.0,417.8 L617.0,416.8 L618.0,416.8 L618.0,415.1 L619.0,415.1 L619.0,415.0 L620.0,415.0 L620.0,412.4 L621.0,412.4 L621.0,412.3 L622.0,412.3 L622.0,409.9 L623.0,409.9 L623.0,411.0 L624.0,411.0 L624.0,410.1 L625.0,410.1 L625.0,410.8 L626.0,410.8 L626.0,406.6 L627.0,406.6 L627.0,405.0 L628.0,405.0 L628.0,401.3 L629.0,401.3 L629.0,402.5 L630.0,402.5 L630.0,404.5 L631.0,404.5 L631.0,405.2 L632.0,405.2 L632.0,403.0 L633.0,403.0 L633.0,404.1 L634.0,404.1 L634.0,399.3 L635.0,399.3 L635.0,400.6 L636.0,400.6 L636.0,406.0 L637.0,406.0 L637.0,405.4 L638.0,405.4 L638.0,398.8 L639.0,398.8 L639.0,403.3 L640.0,403.3 L640.0,405.8 L641.0,405.8 L641.0,403.1 L642.0,403.1 L642.0,408.0 L643.0,408.0 L643.0,408.9 L644.0,408.9 L644.0,410.3 L645.0,410.3 L644.5,417.7 Z" fill="#858585"/>
<rect x="153.3" y="231.3" width="492.7" height="1.3" fill="#b0b0b0"/>
<rect x="153.3" y="271.8" width="492.7" height="1.3" fill="#b0b0b0"/>
<rect x="153.3" y="312.0" width="492.7" height="1.3" fill="#b0b0b0"/>
<rect x="153.3" y="352.3" width="492.7" height="1.3" fill="#b0b0b0"/>
<rect x="153.3" y="392.6" width="492.7" height="1.3" fill="#b0b0b0"/>
<rect x="153.3" y="432.0" width="492.7" height="1" fill="#a8a8a8"/>
<rect x="192.4" y="432.5" width="0.8" height="2" fill="#a8a8a8"/>
<rect x="230.4" y="432.5" width="0.8" height="2" fill="#a8a8a8"/>
<rect x="268.3" y="432.5" width="0.8" height="2" fill="#a8a8a8"/>
<rect x="306.3" y="432.5" width="0.8" height="2" fill="#a8a8a8"/>
<rect x="344.2" y="432.5" width="0.8" height="2" fill="#a8a8a8"/>
<rect x="382.2" y="432.5" width="0.8" height="2" fill="#a8a8a8"/>
<rect x="420.2" y="432.5" width="0.8" height="2" fill="#a8a8a8"/>
<rect x="458.1" y="432.5" width="0.8" height="2" fill="#a8a8a8"/>
<rect x="496.1" y="432.5" width="0.8" height="2" fill="#a8a8a8"/>
<rect x="534.0" y="432.5" width="0.8" height="2" fill="#a8a8a8"/>
<rect x="572.0" y="432.5" width="0.8" height="2" fill="#a8a8a8"/>
<rect x="610.0" y="432.5" width="0.8" height="2" fill="#a8a8a8"/>
</svg>
<div class="ct" style="left:155.6px;top:153.1px"><span style="letter-spacing:-0.3px">AUDUSD-,H1</span>&nbsp;&nbsp; 0.74780 0.74787 0.74769 0.74781</div>
<div style="left:159.4px;top:158.1px;font-family:'Liberation Sans',sans-serif;font-size:9.8px;-webkit-text-stroke:0.35px #f01010;letter-spacing:0.35px;line-height:11px;color:#f01010;white-space:nowrap">Text</div>
<div class="ct" style="left:155.6px;top:233.9px">.Analyst Views&nbsp; .Analyst Views</div>
<div class="ct" style="left:155.6px;top:274.1px">MACD(12,26,9) 0.000777 0.001222</div>
<div class="ct" style="left:155.6px;top:314.6px">OsMA(12,26,9) -0.0004452</div>
<div class="ct" style="left:155.6px;top:354.5px">CCI(14) -199.7259</div>
<div class="ct" style="left:155.6px;top:395.1px">Bulls(13) -0.00076</div>
<div class="ct" style="left:153.8px;top:434.3px">9 Feb 2022</div><div class="ct" style="left:192.0px;top:434.3px">11 Feb 14:00</div><div class="ct" style="left:230.0px;top:434.3px">15 Feb 14:00</div><div class="ct" style="left:267.9px;top:434.3px">17 Feb 14:00</div><div class="ct" style="left:305.9px;top:434.3px">21 Feb 14:00</div><div class="ct" style="left:343.8px;top:434.3px">23 Feb 14:00</div><div class="ct" style="left:381.8px;top:434.3px">25 Feb 14:00</div><div class="ct" style="left:419.8px;top:434.3px">1 Mar 14:00</div><div class="ct" style="left:457.7px;top:434.3px">3 Mar 14:00</div><div class="ct" style="left:495.7px;top:434.3px">7 Mar 14:00</div><div class="ct" style="left:533.6px;top:434.3px">9 Mar 14:00</div><div class="ct" style="left:571.6px;top:434.3px">11 Mar 14:00</div><div class="ct" style="left:609.6px;top:434.3px">15 Mar 14:00</div>

<!-- market watch -->
<div style="left:7.6px;top:151.6px;width:142.7px;height:144.6px;background:#ffffff"></div>
<div style="left:7.6px;top:151.6px;width:135px;height:6.3px;background:#cddcec"></div>
<div class="t6" style="left:9.1px;top:151.4px;font-size:6.5px;color:#111;transform:scaleX(0.875);transform-origin:left top">Market Watch: 07:03:25</div>
<svg style="position:absolute;left:0;top:0" width="675" height="607"><path d="M144.8,152.8 L148.2,156.2 M148.2,152.8 L144.8,156.2" stroke="#222" stroke-width="1"/></svg>
<div class="t6" style="left:10.7px;top:159.6px;font-size:6.3px;color:#333">Symbol</div>
<div class="t6 r" style="right:567.4px;top:159.6px;font-size:6.3px;color:#333">Bid</div>
<div class="t6 r" style="right:527.1px;top:159.6px;font-size:6.3px;color:#333">Ask</div>
<div style="position:absolute;left:7.6px;top:168.20px;width:142.7px;height:9.85px;background:#fde3c8"></div><div style="position:absolute;left:11.1px;top:171.80px;width:2.6px;height:2.6px;background:#f05a40;border:0.6px solid #a02010;transform:rotate(45deg)"></div><div class="t6" style="left:18px;top:169.80px;color:#333;font-size:6.6px;transform:scaleX(0.885);transform-origin:left top">XAUUSD</div><div class="t6 r" style="right:567.6px;top:170.20px;color:#ff2a2a;font-size:6.9px;transform:scaleX(0.875);transform-origin:right top">1898.87</div><div class="t6 r" style="right:527.0px;top:170.20px;color:#ff2a2a;font-size:6.9px;transform:scaleX(0.875);transform-origin:right top">1899.26</div><div style="position:absolute;left:7.6px;top:178.05px;width:142.7px;height:9.85px;background:#fde3c8"></div><div style="position:absolute;left:11.1px;top:181.65px;width:2.6px;height:2.6px;background:#50c050;border:0.6px solid #107020;transform:rotate(45deg)"></div><div class="t6" style="left:18px;top:179.65px;color:#333;font-size:6.6px;transform:scaleX(0.885);transform-origin:left top">XAGUSDM</div><div class="t6 r" style="right:567.6px;top:180.05px;color:#3333cc;font-size:6.9px;transform:scaleX(0.875);transform-origin:right top">23.524</div><div class="t6 r" style="right:527.0px;top:180.05px;color:#3333cc;font-size:6.9px;transform:scaleX(0.875);transform-origin:right top">23.569</div><div style="position:absolute;left:7.6px;top:187.90px;width:142.7px;height:9.85px;background:#fbc3cc"></div><div style="position:absolute;left:11.1px;top:191.50px;width:2.6px;height:2.6px;background:#50c050;border:0.6px solid #107020;transform:rotate(45deg)"></div><div class="t6" style="left:18px;top:189.50px;color:#c8a0a8;font-size:6.6px;transform:scaleX(0.885);transform-origin:left top">USDHKD</div><div class="t6 r" style="right:567.6px;top:189.90px;color:#3333cc;font-size:6.9px;transform:scaleX(0.875);transform-origin:right top">7.8500</div><div class="t6 r" style="right:527.0px;top:189.90px;color:#3333cc;font-size:6.9px;transform:scaleX(0.875);transform-origin:right top">7.8500</div><div style="position:absolute;left:7.6px;top:197.75px;width:142.7px;height:9.85px;background:#0270d6"></div><div style="position:absolute;left:11.1px;top:201.35px;width:2.6px;height:2.6px;background:#f05a40;border:0.6px solid #a02010;transform:rotate(45deg)"></div><div class="t6" style="left:18px;top:199.35px;color:#ffffff;font-size:6.6px;transform:scaleX(0.885);transform-origin:left top">AUDUSD-</div><div class="t6 r" style="right:567.6px;top:199.75px;color:#e8f0ff;font-size:6.9px;transform:scaleX(0.875);transform-origin:right top">0.71595</div><div class="t6 r" style="right:527.0px;top:199.75px;color:#e8f0ff;font-size:6.9px;transform:scaleX(0.875);transform-origin:right top">0.71623</div><div style="position:absolute;left:7.6px;top:207.60px;width:142.7px;height:9.85px;background:#98f898"></div><div style="position:absolute;left:11.1px;top:211.20px;width:2.6px;height:2.6px;background:#50c050;border:0.6px solid #107020;transform:rotate(45deg)"></div><div class="t6" style="left:18px;top:209.20px;color:#333;font-size:6.6px;transform:scaleX(0.885);transform-origin:left top">EURUSD-</div><div class="t6 r" style="right:567.6px;top:209.60px;color:#2222cc;font-size:6.9px;transform:scaleX(0.875);transform-origin:right top">1.06376</div><div class="t6 r" style="right:527.0px;top:209.60px;color:#2222cc;font-size:6.9px;transform:scaleX(0.875);transform-origin:right top">1.06394</div><div style="position:absolute;left:7.6px;top:217.45px;width:142.7px;height:9.85px;background:#98f898"></div><div style="position:absolute;left:11.1px;top:221.05px;width:2.6px;height:2.6px;background:#50c050;border:0.6px solid #107020;transform:rotate(45deg)"></div><div class="t6" style="left:18px;top:219.05px;color:#333;font-size:6.6px;transform:scaleX(0.885);transform-origin:left top">GBPUSD-</div><div class="t6 r" style="right:567.6px;top:219.45px;color:#2222cc;font-size:6.9px;transform:scaleX(0.875);transform-origin:right top">1.25750</div><div class="t6 r" style="right:527.0px;top:219.45px;color:#2222cc;font-size:6.9px;transform:scaleX(0.875);transform-origin:right top">1.25777</div><div style="position:absolute;left:7.6px;top:227.30px;width:142.7px;height:9.85px;background:#98f898"></div><div style="position:absolute;left:11.1px;top:230.90px;width:2.6px;height:2.6px;background:#50c050;border:0.6px solid #107020;transform:rotate(45deg)"></div><div class="t6" style="left:18px;top:228.90px;color:#333;font-size:6.6px;transform:scaleX(0.885);transform-origin:left top">USDCAD-</div><div class="t6 r" style="right:567.6px;top:229.30px;color:#2222cc;font-size:6.9px;transform:scaleX(0.875);transform-origin:right top">1.27930</div><div class="t6 r" style="right:527.0px;top:229.30px;color:#2222cc;font-size:6.9px;transform:scaleX(0.875);transform-origin:right top">1.27958</div><div style="position:absolute;left:7.6px;top:237.15px;width:142.7px;height:9.85px;background:#98f898"></div><div style="position:absolute;left:11.1px;top:240.75px;width:2.6px;height:2.6px;background:#50c050;border:0.6px solid #107020;transform:rotate(45deg)"></div><div class="t6" style="left:18px;top:238.75px;color:#333;font-size:6.6px;transform:scaleX(0.885);transform-origin:left top">USDJPY-</div><div class="t6 r" style="right:567.6px;top:239.15px;color:#2222cc;font-size:6.9px;transform:scaleX(0.875);transform-origin:right top">127.725</div><div class="t6 r" style="right:527.0px;top:239.15px;color:#2222cc;font-size:6.9px;transform:scaleX(0.875);transform-origin:right top">127.748</div><div style="position:absolute;left:7.6px;top:247.00px;width:142.7px;height:9.85px;background:#98f898"></div><div style="position:absolute;left:11.1px;top:250.60px;width:2.6px;height:2.6px;background:#50c050;border:0.6px solid #107020;transform:rotate(45deg)"></div><div class="t6" style="left:18px;top:248.60px;color:#333;font-size:6.6px;transform:scaleX(0.885);transform-origin:left top">USDCHF-</div><div class="t6 r" style="right:567.6px;top:249.00px;color:#2222cc;font-size:6.9px;transform:scaleX(0.875);transform-origin:right top">0.96333</div><div class="t6 r" style="right:527.0px;top:249.00px;color:#2222cc;font-size:6.9px;transform:scaleX(0.875);transform-origin:right top">0.96360</div><div style="position:absolute;left:7.6px;top:177.55px;width:142.7px;height:0.8px;background:rgba(255,255,255,0.3)"></div><div style="position:absolute;left:7.6px;top:187.40px;width:142.7px;height:0.8px;background:rgba(255,255,255,0.3)"></div><div style="position:absolute;left:7.6px;top:197.25px;width:142.7px;height:0.8px;background:rgba(255,255,255,0.3)"></div><div style="position:absolute;left:7.6px;top:207.10px;width:142.7px;height:0.8px;background:rgba(255,255,255,0.3)"></div><div style="position:absolute;left:7.6px;top:216.95px;width:142.7px;height:0.8px;background:rgba(255,255,255,0.3)"></div><div style="position:absolute;left:7.6px;top:226.80px;width:142.7px;height:0.8px;background:rgba(255,255,255,0.3)"></div><div style="position:absolute;left:7.6px;top:236.65px;width:142.7px;height:0.8px;background:rgba(255,255,255,0.3)"></div><div style="position:absolute;left:7.6px;top:246.50px;width:142.7px;height:0.8px;background:rgba(255,255,255,0.3)"></div><div style="position:absolute;left:68.3px;top:158px;width:0.8px;height:99px;background:rgba(255,255,255,0.4)"></div><div style="position:absolute;left:108.9px;top:158px;width:0.8px;height:99px;background:rgba(255,255,255,0.4)"></div>
<div style="left:7.6px;top:284.3px;width:142.2px;height:12px;background:#f0f0f0"></div>
<div style="left:7.6px;top:284px;width:142.2px;height:0.8px;background:#8c8c8c"></div>
<div style="left:9px;top:284px;width:33.2px;height:9.8px;background:#ffffff;border:0.7px solid #8c8c8c;border-top:none"></div>
<div class="t6" style="left:14px;top:285.9px;font-size:6.6px;color:#222">Symbols</div>
<div class="t6" style="left:47px;top:285.9px;font-size:6.5px;color:#999">Tick Chart</div>
<div style="left:79.8px;top:286px;width:0.7px;height:6px;background:#aaa"></div>
<div style="left:7.6px;top:296.2px;width:142.7px;height:0.8px;background:#d4d4d4"></div>

<!-- navigator -->
<div style="left:7.6px;top:297.6px;width:142.7px;height:131px;background:#ffffff"></div>
<div style="left:7.6px;top:297.8px;width:134.9px;height:6.4px;background:#cddcec"></div>
<div class="t6" style="left:9.1px;top:297.5px;font-size:5.7px;color:#222">Navigator</div>
<svg style="position:absolute;left:0;top:0" width="675" height="607"><path d="M145.4,299.4 L148.8,302.8 M148.8,299.4 L145.4,302.8" stroke="#222" stroke-width="1"/></svg>
<div style="left:142.2px;top:304.5px;width:7.4px;height:124px;background:#f0f0f0"></div>
<div style="left:142.8px;top:313.5px;width:6.2px;height:35px;background:#c6c6c6"></div>
<svg style="position:absolute;left:0;top:0" width="675" height="607">
<path d="M144.2,310.3 L145.9,308.6 L147.6,310.3" stroke="#555" stroke-width="0.7" fill="none"/>
<path d="M144.2,424.6 L145.9,426.3 L147.6,424.6" stroke="#555" stroke-width="0.7" fill="none"/>
</svg>
<svg style="position:absolute;left:0;top:0" width="675" height="607"><rect x="10.6" y="306.2" width="5.6" height="4" fill="#e6effa" stroke="#5b93d8" stroke-width="0.8" rx="0.6"/><rect x="12.3" y="308.6" width="5.6" height="4" fill="#e6effa" stroke="#5b93d8" stroke-width="0.8" rx="0.6"/><circle cx="23" cy="315.8" r="1.6" fill="#e8b828"/><circle cx="26.3" cy="315.8" r="1.6" fill="#e8b828"/><rect x="20.6" y="317.2" width="8.2" height="4" rx="1.8" fill="#e0b020"/><circle cx="21.6" cy="319.6" r="1.4" fill="#22b030"/><rect x="31.8" y="323.3" width="5.4" height="7.2" rx="0.9" fill="#2a82e4" stroke="#1a5ab0" stroke-width="0.4"/><path d="M33.4,324.9 V328.6 H35.6" stroke="#cfe4ff" stroke-width="0.7" fill="none"/><circle cx="45.1" cy="333.9" r="1.8" fill="#e6b420"/><path d="M42,339.2 Q42,335.7 45.1,335.7 Q48.4,335.7 48.4,339.2 Z" fill="#e0ac18"/><rect x="31.8" y="340.8" width="5.4" height="7.2" rx="0.9" fill="#2a82e4" stroke="#1a5ab0" stroke-width="0.4"/><path d="M33.4,342.4 V346.1 H35.6" stroke="#cfe4ff" stroke-width="0.7" fill="none"/><circle cx="45.1" cy="351.4" r="1.8" fill="#e6b420"/><path d="M42,356.8 Q42,353.2 45.1,353.2 Q48.4,353.2 48.4,356.8 Z" fill="#e0ac18"/><rect x="20.4" y="358.7" width="6.6" height="6.4" rx="1" fill="#f2d868" stroke="#b8922a" stroke-width="0.6"/><path d="M24.7,359.9 L22.7,364.3" stroke="#6a5010" stroke-width="0.7"/><rect x="31.3" y="367.5" width="6.6" height="6.4" rx="1" fill="#f2d868" stroke="#b8922a" stroke-width="0.6"/><path d="M35.6,368.7 L33.6,373.1" stroke="#6a5010" stroke-width="0.7"/><rect x="31.3" y="376.2" width="6.6" height="6.4" rx="1" fill="#f2d868" stroke="#b8922a" stroke-width="0.6"/><path d="M35.6,377.4 L33.6,381.8" stroke="#6a5010" stroke-width="0.7"/><rect x="31.3" y="385.0" width="6.6" height="6.4" rx="1" fill="#f2d868" stroke="#b8922a" stroke-width="0.6"/><path d="M35.6,386.2 L33.6,390.6" stroke="#6a5010" stroke-width="0.7"/><rect x="31.3" y="393.7" width="6.6" height="6.4" rx="1" fill="#f2d868" stroke="#b8922a" stroke-width="0.6"/><path d="M35.6,394.9 L33.6,399.3" stroke="#6a5010" stroke-width="0.7"/><rect x="31.3" y="402.5" width="6.6" height="6.4" rx="1" fill="#f2d868" stroke="#b8922a" stroke-width="0.6"/><path d="M35.6,403.7 L33.6,408.1" stroke="#6a5010" stroke-width="0.7"/><rect x="31.3" y="411.2" width="6.6" height="6.4" rx="1" fill="#f2d868" stroke="#b8922a" stroke-width="0.6"/><path d="M35.6,412.4 L33.6,416.8" stroke="#6a5010" stroke-width="0.7"/><rect x="41.9" y="420.0" width="6.6" height="6.4" rx="1" fill="#f2d868" stroke="#b8922a" stroke-width="0.6"/><path d="M46.2,421.2 L44.2,425.6" stroke="#6a5010" stroke-width="0.7"/><circle cx="47.8" cy="426.0" r="1.1" fill="#777"/><rect x="41.9" y="428.7" width="6.6" height="6.4" rx="1" fill="#f2d868" stroke="#b8922a" stroke-width="0.6"/><path d="M46.2,429.9 L44.2,434.3" stroke="#6a5010" stroke-width="0.7"/><circle cx="47.8" cy="434.7" r="1.1" fill="#777"/><line x1="14.3" y1="313" x2="14.3" y2="429" stroke="#b8b8b8" stroke-width="0.6"/><line x1="24.6" y1="322" x2="24.6" y2="344.5" stroke="#b8b8b8" stroke-width="0.6"/><line x1="24.6" y1="366" x2="24.6" y2="429" stroke="#b8b8b8" stroke-width="0.6"/><line x1="34.8" y1="331" x2="34.8" y2="335.8" stroke="#b8b8b8" stroke-width="0.6"/><line x1="34.8" y1="335.8" x2="41.4" y2="335.8" stroke="#b8b8b8" stroke-width="0.6"/><line x1="34.8" y1="348.6" x2="34.8" y2="353.4" stroke="#b8b8b8" stroke-width="0.6"/><line x1="34.8" y1="353.4" x2="41.4" y2="353.4" stroke="#b8b8b8" stroke-width="0.6"/><line x1="34.8" y1="418" x2="34.8" y2="429" stroke="#b8b8b8" stroke-width="0.6"/><line x1="34.8" y1="422.6" x2="41.4" y2="422.6" stroke="#b8b8b8" stroke-width="0.6"/><line x1="16.6" y1="318.4" x2="19.6" y2="318.4" stroke="#b8b8b8" stroke-width="0.6"/><rect x="12.1" y="316.2" width="4.5" height="4.5" fill="#f4f4f4" stroke="#b0b0b0" stroke-width="0.6"/><line x1="13.2" y1="318.4" x2="15.5" y2="318.4" stroke="#5a7ab0" stroke-width="0.6"/><line x1="26.8" y1="327.1" x2="29.8" y2="327.1" stroke="#b8b8b8" stroke-width="0.6"/><rect x="22.3" y="324.9" width="4.5" height="4.5" fill="#f4f4f4" stroke="#b0b0b0" stroke-width="0.6"/><line x1="23.400000000000002" y1="327.2" x2="25.7" y2="327.2" stroke="#5a7ab0" stroke-width="0.6"/><line x1="26.8" y1="344.6" x2="29.8" y2="344.6" stroke="#b8b8b8" stroke-width="0.6"/><rect x="22.3" y="342.4" width="4.5" height="4.5" fill="#f4f4f4" stroke="#b0b0b0" stroke-width="0.6"/><line x1="23.400000000000002" y1="344.7" x2="25.7" y2="344.7" stroke="#5a7ab0" stroke-width="0.6"/><line x1="16.6" y1="362.1" x2="19.6" y2="362.1" stroke="#b8b8b8" stroke-width="0.6"/><rect x="12.1" y="359.9" width="4.5" height="4.5" fill="#f4f4f4" stroke="#b0b0b0" stroke-width="0.6"/><line x1="13.2" y1="362.2" x2="15.5" y2="362.2" stroke="#5a7ab0" stroke-width="0.6"/><line x1="26.8" y1="370.9" x2="29.8" y2="370.9" stroke="#b8b8b8" stroke-width="0.6"/><rect x="22.3" y="368.7" width="4.5" height="4.5" fill="#f4f4f4" stroke="#b0b0b0" stroke-width="0.6"/><line x1="23.400000000000002" y1="370.9" x2="25.7" y2="370.9" stroke="#5a7ab0" stroke-width="0.6"/><line x1="24.55" y1="369.8" x2="24.55" y2="372.1" stroke="#5a7ab0" stroke-width="0.6"/><line x1="26.8" y1="379.6" x2="29.8" y2="379.6" stroke="#b8b8b8" stroke-width="0.6"/><rect x="22.3" y="377.4" width="4.5" height="4.5" fill="#f4f4f4" stroke="#b0b0b0" stroke-width="0.6"/><line x1="23.400000000000002" y1="379.7" x2="25.7" y2="379.7" stroke="#5a7ab0" stroke-width="0.6"/><line x1="24.55" y1="378.5" x2="24.55" y2="380.8" stroke="#5a7ab0" stroke-width="0.6"/><line x1="26.8" y1="388.4" x2="29.8" y2="388.4" stroke="#b8b8b8" stroke-width="0.6"/><rect x="22.3" y="386.2" width="4.5" height="4.5" fill="#f4f4f4" stroke="#b0b0b0" stroke-width="0.6"/><line x1="23.400000000000002" y1="388.4" x2="25.7" y2="388.4" stroke="#5a7ab0" stroke-width="0.6"/><line x1="24.55" y1="387.2" x2="24.55" y2="389.6" stroke="#5a7ab0" stroke-width="0.6"/><line x1="26.8" y1="397.1" x2="29.8" y2="397.1" stroke="#b8b8b8" stroke-width="0.6"/><rect x="22.3" y="394.9" width="4.5" height="4.5" fill="#f4f4f4" stroke="#b0b0b0" stroke-width="0.6"/><line x1="23.400000000000002" y1="397.2" x2="25.7" y2="397.2" stroke="#5a7ab0" stroke-width="0.6"/><line x1="24.55" y1="396.0" x2="24.55" y2="398.3" stroke="#5a7ab0" stroke-width="0.6"/><line x1="26.8" y1="405.9" x2="29.8" y2="405.9" stroke="#b8b8b8" stroke-width="0.6"/><rect x="22.3" y="403.7" width="4.5" height="4.5" fill="#f4f4f4" stroke="#b0b0b0" stroke-width="0.6"/><line x1="23.400000000000002" y1="405.9" x2="25.7" y2="405.9" stroke="#5a7ab0" stroke-width="0.6"/><line x1="24.55" y1="404.8" x2="24.55" y2="407.1" stroke="#5a7ab0" stroke-width="0.6"/><line x1="26.8" y1="414.6" x2="29.8" y2="414.6" stroke="#b8b8b8" stroke-width="0.6"/><rect x="22.3" y="412.4" width="4.5" height="4.5" fill="#f4f4f4" stroke="#b0b0b0" stroke-width="0.6"/><line x1="23.400000000000002" y1="414.7" x2="25.7" y2="414.7" stroke="#5a7ab0" stroke-width="0.6"/></svg><div class="t6" style="left:21.0px;top:305.9px;color:#222;font-size:6.6px;transform:scaleX(0.944);transform-origin:left top;">Hantec</div><div class="t6" style="left:31.2px;top:314.7px;color:#222;font-size:6.6px;transform:scaleX(0.944);transform-origin:left top;">Accounts</div><div class="t6" style="left:41.5px;top:323.4px;color:#222;font-size:6.6px;transform:scaleX(0.944);transform-origin:left top;">HantecMarketsVu-S2-Main</div><div class="t6" style="left:52.0px;top:332.2px;color:#222;font-size:6.6px;transform:scaleX(0.944);transform-origin:left top;">1007: Tim Live Test</div><div class="t6" style="left:41.5px;top:340.9px;color:#222;font-size:6.6px;transform:scaleX(0.944);transform-origin:left top;">HantecMarketsVu-S3-Demo</div><div class="t6" style="left:52.0px;top:349.7px;color:#222;font-size:6.6px;transform:scaleX(0.944);transform-origin:left top;">20150452: Nguy?n V?n Thanh</div><div class="t6" style="left:31.2px;top:358.4px;color:#222;font-size:6.6px;transform:scaleX(0.944);transform-origin:left top;">Indicators</div><div class="t6" style="left:41.5px;top:367.2px;color:#222;font-size:6.6px;transform:scaleX(0.944);transform-origin:left top;">Trend</div><div class="t6" style="left:41.5px;top:375.9px;color:#222;font-size:6.6px;transform:scaleX(0.944);transform-origin:left top;">Oscillators</div><div class="t6" style="left:41.5px;top:384.7px;color:#222;font-size:6.6px;transform:scaleX(0.944);transform-origin:left top;">Volumes</div><div class="t6" style="left:41.5px;top:393.4px;color:#222;font-size:6.6px;transform:scaleX(0.944);transform-origin:left top;">Bill Williams</div><div class="t6" style="left:41.5px;top:402.2px;color:#222;font-size:6.6px;transform:scaleX(0.944);transform-origin:left top;">Examples</div><div class="t6" style="left:41.5px;top:410.9px;color:#222;font-size:6.6px;transform:scaleX(0.944);transform-origin:left top;letter-spacing:-0.32px;">TRADING CENTRAL</div><div class="t6" style="left:52.0px;top:419.7px;color:#222;font-size:6.6px;transform:scaleX(0.944);transform-origin:left top;">.Analyst Views</div><div class="t6" style="left:52.0px;top:428.4px;color:#222;font-size:6.6px;transform:scaleX(0.944);transform-origin:left top;">.Analyst Views</div>
<div style="left:7.6px;top:428.6px;width:142.7px;height:12px;background:#f0f0f0"></div>
<div style="left:7.6px;top:429.2px;width:142.2px;height:0.8px;background:#8c8c8c"></div>
<div style="left:9px;top:429.2px;width:35.5px;height:9.4px;background:#ffffff;border:0.7px solid #8c8c8c;border-top:none"></div>
<div class="t6" style="left:14.2px;top:430.6px;font-size:6.5px;color:#222">Common</div>
<div class="t6" style="left:49.3px;top:430.6px;font-size:6.5px;color:#999">Favorites</div>
<div style="left:79.4px;top:431px;width:0.7px;height:6px;background:#aaa"></div>

<!-- terminal -->
<div style="left:5px;top:441.3px;width:641px;height:49px;background:#f0f0f0"></div>
<div style="left:5.2px;top:451.3px;width:7.8px;height:38.7px;background:#cad9ea"></div>
<svg style="position:absolute;left:0;top:0" width="675" height="607"><path d="M8,445.2 L11.2,448.4 M11.2,445.2 L8,448.4" stroke="#333" stroke-width="0.9"/></svg>
<div class="t6" style="left:6.6px;top:500.5px;font-size:6.9px;color:#333;transform:rotate(-90deg);transform-origin:left top">Terminal</div>
<div style="left:13.6px;top:444.6px;width:632px;height:10px;background:#ffffff"></div><div style="left:13px;top:444px;width:0.8px;height:46px;background:#a8a8a8"></div><div style="left:13px;top:444px;width:633px;height:0.7px;background:#c8c8c8"></div>
<div class="t6" style="left:16.8px;top:445.4px;font-size:6.35px;color:#333">Name</div>
<div class="t6" style="left:150.1px;top:445.4px;font-size:6.35px;color:#333">Description</div>
<div style="left:148.3px;top:444.6px;width:0.7px;height:10px;background:#e0e0e0"></div>
<div style="position:absolute;left:13.6px;top:454.6px;width:632px;height:9.9px;background:#ffffff"></div><div style="position:absolute;left:16.6px;top:456.5px;width:3px;height:2.8px;background:#4a78b0;border-radius:50%"></div><div style="position:absolute;left:15.6px;top:459.5px;width:5px;height:2.8px;background:#4a78b0;border-radius:1.5px 1.5px 0 0"></div><div class="t6" style="left:24.9px;top:455.9px;font-size:6.6px;transform:scaleX(0.94);transform-origin:left top">Simple Triple MA Cross with Optional RSI</div><div class="t6" style="left:149.8px;top:455.9px;font-size:6.6px;transform:scaleX(0.944);transform-origin:left top">If the first moving average crosses the second and third moving average, then it will trade. Cross up = buy, cross down = sell. I also included an optional RSI buy/sell level.</div><div style="position:absolute;left:13.6px;top:464.6px;width:632px;height:9.9px;background:#e6e6e6"></div><div style="position:absolute;left:15.9px;top:466.8px;width:4.6px;height:4.6px;background:#f6de50;border:0.5px solid #e0c040"></div><svg style="position:absolute;left:0;top:0" width="675" height="607"><path d="M17,469.8 L18,470.9 L19.8,467.8" stroke="#3a3a3a" stroke-width="0.6" fill="none"/></svg><div class="t6" style="left:24.9px;top:465.9px;font-size:6.6px;transform:scaleX(0.94);transform-origin:left top">Weighted deviation bands</div><div class="t6" style="left:149.8px;top:465.9px;font-size:6.6px;transform:scaleX(0.944);transform-origin:left top">Weighted deviation bands - metatrader 4 version</div><div style="position:absolute;left:13.6px;top:474.5px;width:632px;height:9.9px;background:#ffffff"></div><div style="position:absolute;left:15.9px;top:476.7px;width:4.6px;height:4.6px;background:#f6de50;border:0.5px solid #e0c040"></div><svg style="position:absolute;left:0;top:0" width="675" height="607"><path d="M17,479.7 L18,480.9 L19.8,477.7" stroke="#3a3a3a" stroke-width="0.6" fill="none"/></svg><div class="t6" style="left:24.9px;top:475.8px;font-size:6.6px;transform:scaleX(0.94);transform-origin:left top">Weighted deviation</div><div class="t6" style="left:149.8px;top:475.8px;font-size:6.6px;transform:scaleX(0.944);transform-origin:left top">Weighted deviation - metatrader 4 version</div>
<div style="left:13.6px;top:484.6px;width:632px;height:0.9px;background:#9a9a9a"></div>
<div style="left:145.9px;top:484.6px;width:37.4px;height:6px;background:#ffffff;border:0.7px solid #9a9a9a;border-top:none"></div>
<div class="t6" style="left:20.7px;top:486.4px;color:#888">Alerts</div>
<div class="t6" style="left:45.6px;top:486.4px;color:#888">Mailbox</div>
<div class="t6" style="left:81.1px;top:486.4px;color:#888">Market</div>
<div class="t6" style="left:110.4px;top:486.4px;color:#888">Articles</div>
<div class="t6" style="left:150px;top:486.4px;color:#222">Code Base</div>
<div class="t6" style="left:188.5px;top:486.4px;color:#888">Experts</div>
<div class="t6" style="left:219.6px;top:486.4px;color:#888">Journal</div>
<div style="left:40.6px;top:486px;width:0.7px;height:4px;background:#aaa"></div>
<div style="left:76.1px;top:486px;width:0.7px;height:4px;background:#aaa"></div>
<div style="left:105.1px;top:486px;width:0.7px;height:4px;background:#aaa"></div>
<div style="left:213.4px;top:486px;width:0.7px;height:4px;background:#aaa"></div>
<div style="left:243.4px;top:486px;width:0.7px;height:4px;background:#aaa"></div>
<div style="left:0;top:490px;width:675px;height:117px;background:#000"></div>
</body></html>
